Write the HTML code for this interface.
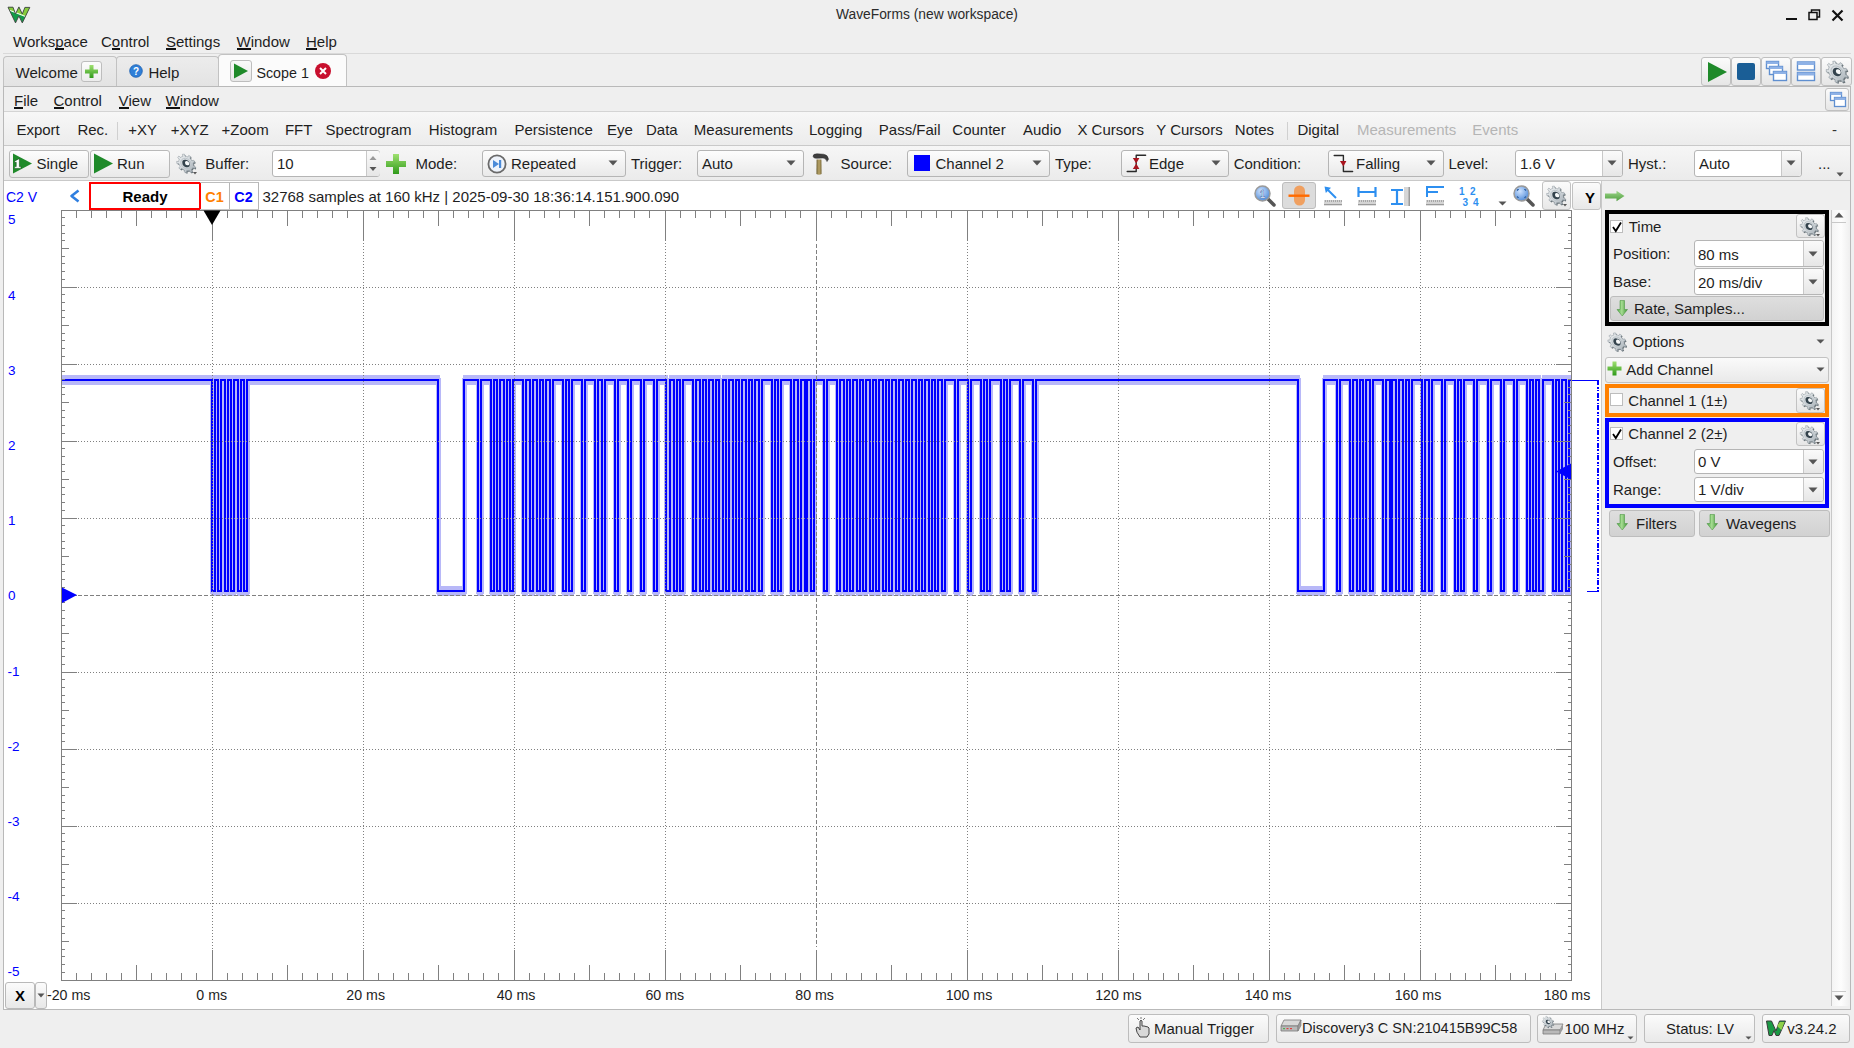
<!DOCTYPE html><html><head><meta charset="utf-8"><style>
html,body{margin:0;padding:0}
body{width:1854px;height:1048px;position:relative;overflow:hidden;background:#efefef;font-family:'Liberation Sans', sans-serif;}
.t{position:absolute;white-space:nowrap;}
.r{position:absolute;box-sizing:border-box;}
svg.r{overflow:visible}
.u{text-decoration:underline;text-underline-offset:2px;text-decoration-thickness:2px}
</style></head><body>

<svg class="r" style="left:7px;top:5px;" width="24" height="20" viewBox="0 0 24 20">
<defs><clipPath id="wl"><path d="M1 2.2 L6 2.2 L8.5 9 L11.9 1.9 L15.3 9 L17.9 2.4 L22.8 2.4 L15.3 17.9 L11.9 11 L8.5 17.9 Z"/></clipPath></defs>
<path d="M1 2.2 L6 2.2 L8.5 9 L11.9 1.9 L15.3 9 L17.9 2.4 L22.8 2.4 L15.3 17.9 L11.9 11 L8.5 17.9 Z" fill="#129a48"/>
<g clip-path="url(#wl)"><path d="M0 0 H24 V13.5 L3 5.2 L0 5 Z" fill="#86cc3c"/><path d="M2.5 5.3 L21 12.6" stroke="#f4fff0" stroke-width="1.1"/></g>
<path d="M1 2.2 L6 2.2 L8.5 9 L11.9 1.9 L15.3 9 L17.9 2.4 L22.8 2.4 L15.3 17.9 L11.9 11 L8.5 17.9 Z" fill="none" stroke="#454545" stroke-width="0.9" stroke-linejoin="round"/>
</svg>
<div class="t" style="left:797.0px;width:260px;text-align:center;top:8.32px;font-size:13.8px;line-height:13.8px;color:#2b2b2b;font-weight:normal;">WaveForms (new workspace)</div>
<div class="r" style="left:1786px;top:18px;width:11px;height:2px;background:#111"></div>
<svg class="r" style="left:1808px;top:9px;" width="14" height="12" viewBox="0 0 14 12"><rect x="1" y="3.5" width="8" height="7" fill="none" stroke="#111" stroke-width="1.5"/><path d="M3.5 3.5 V1 H11.5 V8 H9" fill="none" stroke="#111" stroke-width="1.5"/></svg>
<svg class="r" style="left:1831px;top:9px;" width="13" height="13" viewBox="0 0 13 13"><path d="M1.5 1.5 L11.5 11.5 M11.5 1.5 L1.5 11.5" stroke="#111" stroke-width="2.2"/></svg>
<div class="t" style="left:13px;top:33.20px;font-size:15px;line-height:15px;color:#1e1e1e">Works<span style="border-bottom:2px solid #111;display:inline-block;line-height:18px;height:15px">p</span>ace</div>
<div class="t" style="left:101px;top:33.20px;font-size:15px;line-height:15px;color:#1e1e1e">C<span style="border-bottom:2px solid #111;display:inline-block;line-height:18px;height:15px">o</span>ntrol</div>
<div class="t" style="left:166px;top:33.20px;font-size:15px;line-height:15px;color:#1e1e1e"><span style="border-bottom:2px solid #111;display:inline-block;line-height:18px;height:15px">S</span>ettings</div>
<div class="t" style="left:236.5px;top:33.20px;font-size:15px;line-height:15px;color:#1e1e1e"><span style="border-bottom:2px solid #111;display:inline-block;line-height:18px;height:15px">W</span>indow</div>
<div class="t" style="left:306px;top:33.20px;font-size:15px;line-height:15px;color:#1e1e1e"><span style="border-bottom:2px solid #111;display:inline-block;line-height:18px;height:15px">H</span>elp</div>
<div class="r" style="left:3px;top:53px;width:1848px;height:1px;background:#d9d9d9"></div>
<div class="r" style="left:3px;top:56px;width:114px;height:31px;background:linear-gradient(#ececec,#e3e3e3);border:1px solid #c2c2c2;border-bottom:none;border-radius:4px 4px 0 0"></div>
<div class="t" style="left:15.5px;top:65.00px;font-size:15px;line-height:15px;color:#1e1e1e;font-weight:normal;">Welcome</div>
<div class="r" style="left:81px;top:61px;width:21px;height:21px;background:linear-gradient(#fcfcfc,#ececec);border:1px solid #bdbdbd;border-radius:3px"></div>
<svg class="r" style="left:84px;top:64px;" width="16" height="16" viewBox="0 0 16 16"><defs><linearGradient id="gp" x1="0" y1="0" x2="0" y2="1"><stop offset="0" stop-color="#9fe070"/><stop offset="1" stop-color="#2f9a1a"/></linearGradient></defs><path d="M5.5 1 H9.5 V5.5 H14 V9.5 H9.5 V14 H5.5 V9.5 H1 V5.5 H5.5 Z" fill="url(#gp)"/></svg>
<div class="r" style="left:116px;top:56px;width:103px;height:31px;background:linear-gradient(#ececec,#e3e3e3);border:1px solid #c2c2c2;border-bottom:none;border-radius:4px 4px 0 0"></div>
<svg class="r" style="left:129px;top:64px;" width="14" height="14" viewBox="0 0 14 14"><circle cx="7" cy="7" r="6.3" fill="#2f7fd8" stroke="#1d5fb0" stroke-width="0.8"/><text x="7" y="11" text-anchor="middle" font-family="Liberation Sans" font-weight="bold" font-size="10" fill="#fff">?</text></svg>
<div class="t" style="left:148.4px;top:65.00px;font-size:15px;line-height:15px;color:#1e1e1e;font-weight:normal;">Help</div>
<div class="r" style="left:218px;top:54px;width:129px;height:34px;background:#fbfbfb;border:1px solid #c2c2c2;border-bottom:none;border-radius:4px 4px 0 0"></div>
<div class="r" style="left:230px;top:60px;width:22px;height:22px;background:linear-gradient(#fafafa,#e8e8e8);border:1px solid #bdbdbd;border-radius:3px"></div>
<svg class="r" style="left:233px;top:63px;" width="16" height="16" viewBox="0 0 16 16"><path d="M1 0.5 L15 8 L1 15.5 Z" fill="#1f8a2a"/></svg>
<div class="t" style="left:256.4px;top:65.60px;font-size:14.3px;line-height:14.3px;color:#1e1e1e;font-weight:normal;">Scope 1</div>
<svg class="r" style="left:315px;top:63px;" width="16" height="16" viewBox="0 0 16 16"><circle cx="8" cy="8" r="8" fill="#c8102e"/><path d="M5 5 L11 11 M11 5 L5 11" stroke="#fff" stroke-width="2"/></svg>
<div class="r" style="left:1701px;top:57px;width:30px;height:29px;background:linear-gradient(#fbfbfb,#e6e6e6);border:1px solid #c0c0c0;border-radius:3px"></div>
<div class="r" style="left:1731px;top:57px;width:30px;height:29px;background:linear-gradient(#fbfbfb,#e6e6e6);border:1px solid #c0c0c0;border-radius:3px"></div>
<div class="r" style="left:1761px;top:57px;width:30px;height:29px;background:linear-gradient(#fbfbfb,#e6e6e6);border:1px solid #c0c0c0;border-radius:3px"></div>
<div class="r" style="left:1791px;top:57px;width:30px;height:29px;background:linear-gradient(#fbfbfb,#e6e6e6);border:1px solid #c0c0c0;border-radius:3px"></div>
<div class="r" style="left:1821px;top:57px;width:31px;height:29px;background:linear-gradient(#fbfbfb,#e6e6e6);border:1px solid #c0c0c0;border-radius:3px"></div>
<svg class="r" style="left:1706px;top:61px;" width="22" height="22" viewBox="0 0 22 22"><path d="M2 1 L21 11 L2 21 Z" fill="#1f8a2a"/></svg>
<svg class="r" style="left:1736px;top:62px;" width="20" height="20" viewBox="0 0 20 20"><rect x="1" y="1" width="18" height="17" rx="2" fill="#1a5e96"/></svg>
<svg class="r" style="left:1765px;top:60px;" width="22" height="22" viewBox="0 0 22 22"><rect x="1.5" y="1.5" width="12" height="7" fill="#fff" stroke="#5f8fd0" stroke-width="1.4"/><rect x="1.5" y="1.5" width="12" height="2.5" fill="#8fb2e6"/><rect x="4.5" y="6.5" width="13" height="8" fill="#fff" stroke="#5f8fd0" stroke-width="1.4"/><rect x="4.5" y="6.5" width="13" height="2.5" fill="#8fb2e6"/><rect x="8.5" y="11.5" width="13" height="9" fill="#fff" stroke="#5f8fd0" stroke-width="1.4"/><rect x="8.5" y="11.5" width="13" height="2.5" fill="#8fb2e6"/></svg>
<svg class="r" style="left:1796px;top:60px;" width="20" height="22" viewBox="0 0 20 22"><rect x="1.5" y="2" width="17" height="8" fill="#fff" stroke="#5f8fd0" stroke-width="1.4"/><rect x="1.5" y="2" width="17" height="3" fill="#8fb2e6"/><rect x="1.5" y="12.5" width="17" height="8" fill="#fff" stroke="#5f8fd0" stroke-width="1.4"/><rect x="1.5" y="12.5" width="17" height="3" fill="#8fb2e6"/></svg>
<svg width="0" height="0" style="position:absolute"><defs><linearGradient id="gg" x1="0" y1="0" x2="1" y2="1"><stop offset="0" stop-color="#f2f4f5"/><stop offset="0.55" stop-color="#cfd5d9"/><stop offset="1" stop-color="#9aa4ab"/></linearGradient><linearGradient id="ga" x1="0" y1="0" x2="1" y2="0"><stop offset="0" stop-color="#b6e39a"/><stop offset="1" stop-color="#3c9a2a"/></linearGradient></defs></svg>
<svg class="r" style="left:1824px;top:59px;" width="26" height="26" viewBox="0 0 26 26"><g transform="translate(13,13) scale(0.95)"><g transform="rotate(-45) scale(0.8,1) rotate(45)"><path d="M9.90,0.00 L9.72,1.89 L12.26,2.92 L11.27,5.64 L8.66,4.80 L7.58,6.36 L6.23,7.69 L7.51,10.12 L5.00,11.56 L3.55,9.24 L1.72,9.75 L-0.17,9.90 L-0.75,12.58 L-3.60,12.07 L-3.22,9.36 L-4.95,8.57 L-6.49,7.47 L-8.66,9.15 L-10.52,6.94 L-8.49,5.10 L-9.30,3.39 L-9.78,1.55 L-12.52,1.45 L-12.52,-1.45 L-9.78,-1.55 L-9.30,-3.39 L-8.49,-5.10 L-10.52,-6.94 L-8.66,-9.15 L-6.49,-7.47 L-4.95,-8.57 L-3.22,-9.36 L-3.60,-12.07 L-0.75,-12.58 L-0.17,-9.90 L1.72,-9.75 L3.55,-9.24 L5.00,-11.56 L7.51,-10.12 L6.23,-7.69 L7.58,-6.36 L8.66,-4.80 L11.27,-5.64 L12.26,-2.92 L9.72,-1.89 Z" transform="translate(1.2,1.2)" fill="#4e5a62" opacity="0.85"/><path d="M9.90,0.00 L9.72,1.89 L12.26,2.92 L11.27,5.64 L8.66,4.80 L7.58,6.36 L6.23,7.69 L7.51,10.12 L5.00,11.56 L3.55,9.24 L1.72,9.75 L-0.17,9.90 L-0.75,12.58 L-3.60,12.07 L-3.22,9.36 L-4.95,8.57 L-6.49,7.47 L-8.66,9.15 L-10.52,6.94 L-8.49,5.10 L-9.30,3.39 L-9.78,1.55 L-12.52,1.45 L-12.52,-1.45 L-9.78,-1.55 L-9.30,-3.39 L-8.49,-5.10 L-10.52,-6.94 L-8.66,-9.15 L-6.49,-7.47 L-4.95,-8.57 L-3.22,-9.36 L-3.60,-12.07 L-0.75,-12.58 L-0.17,-9.90 L1.72,-9.75 L3.55,-9.24 L5.00,-11.56 L7.51,-10.12 L6.23,-7.69 L7.58,-6.36 L8.66,-4.80 L11.27,-5.64 L12.26,-2.92 L9.72,-1.89 Z" fill="url(#gg)" stroke="#8e979e" stroke-width="0.7"/><circle r="7" fill="none" stroke="#b9c1c7" stroke-width="1.2"/><circle r="5" fill="#34434d"/><circle cx="1.6" cy="-0.6" r="2.9" fill="#f6f8f9"/></g></g></svg>
<div class="r" style="left:3px;top:86px;width:1848px;height:924px;border:1px solid #b9b9b9;background:#efefef"></div>
<div class="t" style="left:14px;top:92.10px;font-size:15px;line-height:15px;color:#1e1e1e"><span style="border-bottom:2px solid #111;display:inline-block;line-height:18px;height:15px">F</span>ile</div>
<div class="t" style="left:53.5px;top:92.10px;font-size:15px;line-height:15px;color:#1e1e1e"><span style="border-bottom:2px solid #111;display:inline-block;line-height:18px;height:15px">C</span>ontrol</div>
<div class="t" style="left:118.5px;top:92.10px;font-size:15px;line-height:15px;color:#1e1e1e"><span style="border-bottom:2px solid #111;display:inline-block;line-height:18px;height:15px">V</span>iew</div>
<div class="t" style="left:165.5px;top:92.10px;font-size:15px;line-height:15px;color:#1e1e1e"><span style="border-bottom:2px solid #111;display:inline-block;line-height:18px;height:15px">W</span>indow</div>
<div class="r" style="left:1825px;top:88px;width:24px;height:23px;background:linear-gradient(#fbfbfb,#e6e6e6);border:1px solid #c0c0c0;border-radius:3px"></div>
<svg class="r" style="left:1829px;top:91px;" width="18" height="18" viewBox="0 0 18 18"><rect x="1.5" y="1.5" width="11" height="8" fill="#fff" stroke="#5f8fd0" stroke-width="1.3"/><rect x="1.5" y="1.5" width="11" height="2.5" fill="#8fb2e6"/><rect x="5.5" y="6.5" width="11" height="9" fill="#fff" stroke="#5f8fd0" stroke-width="1.3"/><rect x="5.5" y="6.5" width="11" height="2.5" fill="#8fb2e6"/></svg>
<div class="r" style="left:4px;top:111px;width:1846px;height:1px;background:#d4d4d4"></div>
<div class="r" style="left:4px;top:112px;width:1846px;height:34px;background:linear-gradient(#f7f7f7,#ececec);border-bottom:1px solid #c9c9c9"></div>
<div class="t" style="left:16.4px;top:122.10px;font-size:15px;line-height:15px;color:#1e1e1e;font-weight:normal;">Export</div>
<div class="t" style="left:77.4px;top:122.10px;font-size:15px;line-height:15px;color:#1e1e1e;font-weight:normal;">Rec.</div>
<div class="t" style="left:128.3px;top:122.10px;font-size:15px;line-height:15px;color:#1e1e1e;font-weight:normal;">+XY</div>
<div class="t" style="left:170.7px;top:122.10px;font-size:15px;line-height:15px;color:#1e1e1e;font-weight:normal;">+XYZ</div>
<div class="t" style="left:221.6px;top:122.10px;font-size:15px;line-height:15px;color:#1e1e1e;font-weight:normal;">+Zoom</div>
<div class="t" style="left:284.9px;top:122.10px;font-size:15px;line-height:15px;color:#1e1e1e;font-weight:normal;">FFT</div>
<div class="t" style="left:325.6px;top:122.10px;font-size:15px;line-height:15px;color:#1e1e1e;font-weight:normal;">Spectrogram</div>
<div class="t" style="left:428.8px;top:122.10px;font-size:15px;line-height:15px;color:#1e1e1e;font-weight:normal;">Histogram</div>
<div class="t" style="left:514.5px;top:122.10px;font-size:15px;line-height:15px;color:#1e1e1e;font-weight:normal;">Persistence</div>
<div class="t" style="left:607.0px;top:122.10px;font-size:15px;line-height:15px;color:#1e1e1e;font-weight:normal;">Eye</div>
<div class="t" style="left:646.0px;top:122.10px;font-size:15px;line-height:15px;color:#1e1e1e;font-weight:normal;">Data</div>
<div class="t" style="left:693.8px;top:122.10px;font-size:15px;line-height:15px;color:#1e1e1e;font-weight:normal;">Measurements</div>
<div class="t" style="left:809.0px;top:122.10px;font-size:15px;line-height:15px;color:#1e1e1e;font-weight:normal;">Logging</div>
<div class="t" style="left:878.8px;top:122.10px;font-size:15px;line-height:15px;color:#1e1e1e;font-weight:normal;">Pass/Fail</div>
<div class="t" style="left:952.3px;top:122.10px;font-size:15px;line-height:15px;color:#1e1e1e;font-weight:normal;">Counter</div>
<div class="t" style="left:1023.0px;top:122.10px;font-size:15px;line-height:15px;color:#1e1e1e;font-weight:normal;">Audio</div>
<div class="t" style="left:1077.4px;top:122.10px;font-size:15px;line-height:15px;color:#1e1e1e;font-weight:normal;">X Cursors</div>
<div class="t" style="left:1156.3px;top:122.10px;font-size:15px;line-height:15px;color:#1e1e1e;font-weight:normal;">Y Cursors</div>
<div class="t" style="left:1234.8px;top:122.10px;font-size:15px;line-height:15px;color:#1e1e1e;font-weight:normal;">Notes</div>
<div class="t" style="left:1297.4px;top:122.10px;font-size:15px;line-height:15px;color:#1e1e1e;font-weight:normal;">Digital</div>
<div class="t" style="left:1357.0px;top:122.10px;font-size:15px;line-height:15px;color:#b5b5b5;font-weight:normal;">Measurements</div>
<div class="t" style="left:1472.3px;top:122.10px;font-size:15px;line-height:15px;color:#b5b5b5;font-weight:normal;">Events</div>
<div class="t" style="left:1832.0px;top:122.10px;font-size:15px;line-height:15px;color:#333;font-weight:normal;">-</div>
<div class="r" style="left:117px;top:122px;width:1px;height:18px;background:#d0d0d0"></div>
<div class="r" style="left:1287px;top:122px;width:1px;height:18px;background:#d0d0d0"></div>
<div class="r" style="left:4px;top:146px;width:1846px;height:35px;background:linear-gradient(#f6f6f6,#ebebeb);border-bottom:1px solid #c9c9c9"></div>
<div class="r" style="left:9px;top:150px;width:80px;height:28px;background:linear-gradient(#fdfdfd,#e9e9e9);border:1px solid #b9b9b9;border-radius:3px;"></div>
<svg class="r" style="left:12px;top:153px;" width="22" height="22" viewBox="0 0 22 22"><path d="M1 0.5 L20 10.5 L1 20.5 Z" fill="#1f8a2a"/><path d="M2.6 8.2 L6.4 6 L7.4 6 L7.4 13.6 L9 13.6 L9 15.4 L2.4 15.4 L2.4 13.6 L4.2 13.6 L4.2 9.2 L2.6 9.8 Z" fill="#fff" stroke="#0d4d16" stroke-width="0.6"/></svg>
<div class="t" style="left:36.5px;top:156.20px;font-size:15px;line-height:15px;color:#1e1e1e;font-weight:normal;">Single</div>
<div class="r" style="left:90px;top:150px;width:80px;height:28px;background:linear-gradient(#fdfdfd,#e9e9e9);border:1px solid #b9b9b9;border-radius:3px;"></div>
<svg class="r" style="left:93px;top:153px;" width="22" height="22" viewBox="0 0 22 22"><path d="M1 0.5 L20 10.5 L1 20.5 Z" fill="#1f8a2a"/></svg>
<div class="t" style="left:117.0px;top:156.20px;font-size:15px;line-height:15px;color:#1e1e1e;font-weight:normal;">Run</div>
<svg class="r" style="left:175px;top:152px;" width="24" height="24" viewBox="0 0 24 24"><g transform="translate(11,11.5) scale(0.82)"><g transform="rotate(-45) scale(0.8,1) rotate(45)"><path d="M9.90,0.00 L9.72,1.89 L12.26,2.92 L11.27,5.64 L8.66,4.80 L7.58,6.36 L6.23,7.69 L7.51,10.12 L5.00,11.56 L3.55,9.24 L1.72,9.75 L-0.17,9.90 L-0.75,12.58 L-3.60,12.07 L-3.22,9.36 L-4.95,8.57 L-6.49,7.47 L-8.66,9.15 L-10.52,6.94 L-8.49,5.10 L-9.30,3.39 L-9.78,1.55 L-12.52,1.45 L-12.52,-1.45 L-9.78,-1.55 L-9.30,-3.39 L-8.49,-5.10 L-10.52,-6.94 L-8.66,-9.15 L-6.49,-7.47 L-4.95,-8.57 L-3.22,-9.36 L-3.60,-12.07 L-0.75,-12.58 L-0.17,-9.90 L1.72,-9.75 L3.55,-9.24 L5.00,-11.56 L7.51,-10.12 L6.23,-7.69 L7.58,-6.36 L8.66,-4.80 L11.27,-5.64 L12.26,-2.92 L9.72,-1.89 Z" transform="translate(1.2,1.2)" fill="#4e5a62" opacity="0.85"/><path d="M9.90,0.00 L9.72,1.89 L12.26,2.92 L11.27,5.64 L8.66,4.80 L7.58,6.36 L6.23,7.69 L7.51,10.12 L5.00,11.56 L3.55,9.24 L1.72,9.75 L-0.17,9.90 L-0.75,12.58 L-3.60,12.07 L-3.22,9.36 L-4.95,8.57 L-6.49,7.47 L-8.66,9.15 L-10.52,6.94 L-8.49,5.10 L-9.30,3.39 L-9.78,1.55 L-12.52,1.45 L-12.52,-1.45 L-9.78,-1.55 L-9.30,-3.39 L-8.49,-5.10 L-10.52,-6.94 L-8.66,-9.15 L-6.49,-7.47 L-4.95,-8.57 L-3.22,-9.36 L-3.60,-12.07 L-0.75,-12.58 L-0.17,-9.90 L1.72,-9.75 L3.55,-9.24 L5.00,-11.56 L7.51,-10.12 L6.23,-7.69 L7.58,-6.36 L8.66,-4.80 L11.27,-5.64 L12.26,-2.92 L9.72,-1.89 Z" fill="url(#gg)" stroke="#8e979e" stroke-width="0.7"/><circle r="7" fill="none" stroke="#b9c1c7" stroke-width="1.2"/><circle r="5" fill="#34434d"/><circle cx="1.6" cy="-0.6" r="2.9" fill="#f6f8f9"/></g></g><path d="M18 20 L22 20 L20 22.5 Z" fill="#555"/></svg>
<div class="t" style="left:205.3px;top:156.20px;font-size:15px;line-height:15px;color:#1e1e1e;font-weight:normal;">Buffer:</div>
<div class="r" style="left:272px;top:150px;width:108px;height:27px;background:#fff;border:1px solid #b5b5b5;border-radius:3px"></div>
<div class="r" style="left:366px;top:151px;width:13px;height:25px;background:linear-gradient(#fafafa,#e6e6e6);border-left:1px solid #c8c8c8;border-radius:0 3px 3px 0"></div>
<svg class="r" style="left:368px;top:160px;" width="10" height="6" viewBox="0 0 10 6"><path d="M0.5 0.5 L9.5 0.5 L5 5.5 Z" fill="#555"/></svg>
<div class="r" style="left:366px;top:151px;width:14px;height:25px;background:linear-gradient(#fafafa,#e6e6e6);border-left:1px solid #c8c8c8;border-radius:0 3px 3px 0"></div>
<svg class="r" style="left:367px;top:154px;" width="12" height="20" viewBox="0 0 12 20"><path d="M2.5 6 L9.5 6 L6 2 Z" fill="#9a9a9a"/><path d="M2.5 13 L9.5 13 L6 17 Z" fill="#555"/></svg>
<div class="t" style="left:277.0px;top:156.20px;font-size:15px;line-height:15px;color:#1e1e1e;font-weight:normal;">10</div>
<svg class="r" style="left:385px;top:153px;" width="22" height="22" viewBox="0 0 22 22"><path d="M8 1 H14 V8 H21 V14 H14 V21 H8 V14 H1 V8 H8 Z" fill="url(#gp)"/></svg>
<div class="t" style="left:415.5px;top:156.20px;font-size:15px;line-height:15px;color:#1e1e1e;font-weight:normal;">Mode:</div>
<div class="r" style="left:482px;top:150px;width:144px;height:27px;background:linear-gradient(#fdfdfd,#e9e9e9);border:1px solid #b5b5b5;border-radius:3px"></div>
<svg class="r" style="left:608px;top:160px;" width="10" height="6" viewBox="0 0 10 6"><path d="M0.5 0.5 L9.5 0.5 L5 5.5 Z" fill="#555"/></svg>
<svg class="r" style="left:487px;top:153.5px;" width="20" height="20" viewBox="0 0 20 20"><circle cx="10" cy="10" r="8.6" fill="#eef3fb" stroke="#6a6a6a" stroke-width="1.8"/><rect x="12" y="6" width="2.2" height="8" fill="#4a8ad8"/><path d="M6 6 L12 10 L6 14 Z" fill="#4a8ad8"/></svg>
<div class="t" style="left:511.0px;top:156.20px;font-size:15px;line-height:15px;color:#1e1e1e;font-weight:normal;">Repeated</div>
<div class="t" style="left:631.0px;top:156.20px;font-size:15px;line-height:15px;color:#1e1e1e;font-weight:normal;">Trigger:</div>
<div class="r" style="left:697px;top:150px;width:107px;height:27px;background:linear-gradient(#fdfdfd,#e9e9e9);border:1px solid #b5b5b5;border-radius:3px"></div>
<svg class="r" style="left:786px;top:160px;" width="10" height="6" viewBox="0 0 10 6"><path d="M0.5 0.5 L9.5 0.5 L5 5.5 Z" fill="#555"/></svg>
<div class="t" style="left:702.0px;top:156.20px;font-size:15px;line-height:15px;color:#1e1e1e;font-weight:normal;">Auto</div>
<svg class="r" style="left:812px;top:153px;" width="18" height="23" viewBox="0 0 18 23"><defs><linearGradient id="hm" x1="0" y1="0" x2="1" y2="0"><stop offset="0" stop-color="#6f6235"/><stop offset="0.5" stop-color="#b9a468"/><stop offset="1" stop-color="#7a6a3a"/></linearGradient></defs><path d="M4.6 6.5 L9.4 6.5 L9.6 21 Q7 22.3 4.4 21 Z" fill="url(#hm)"/><path d="M1 3.2 Q1.2 0.8 5 0.8 L11.5 1.2 Q16 1.8 16.5 6.2 L15 8.6 Q14 5.2 11 5 L4.5 5.3 Q1.5 5.6 1 3.2 Z" fill="#3e3e3e" stroke="#2a2a2a" stroke-width="0.5"/></svg>
<div class="t" style="left:840.6px;top:156.20px;font-size:15px;line-height:15px;color:#1e1e1e;font-weight:normal;">Source:</div>
<div class="r" style="left:907px;top:150px;width:143px;height:27px;background:linear-gradient(#fdfdfd,#e9e9e9);border:1px solid #b5b5b5;border-radius:3px"></div>
<svg class="r" style="left:1032px;top:160px;" width="10" height="6" viewBox="0 0 10 6"><path d="M0.5 0.5 L9.5 0.5 L5 5.5 Z" fill="#555"/></svg>
<div class="r" style="left:914px;top:155px;width:16px;height:16px;background:#0000ff"></div>
<div class="t" style="left:935.5px;top:156.20px;font-size:15px;line-height:15px;color:#1e1e1e;font-weight:normal;">Channel 2</div>
<div class="t" style="left:1055.0px;top:156.20px;font-size:15px;line-height:15px;color:#1e1e1e;font-weight:normal;">Type:</div>
<div class="r" style="left:1121px;top:150px;width:108px;height:27px;background:linear-gradient(#fdfdfd,#e9e9e9);border:1px solid #b5b5b5;border-radius:3px"></div>
<svg class="r" style="left:1211px;top:160px;" width="10" height="6" viewBox="0 0 10 6"><path d="M0.5 0.5 L9.5 0.5 L5 5.5 Z" fill="#555"/></svg>
<svg class="r" style="left:1126px;top:153px;" width="22" height="22" viewBox="0 0 22 22"><path d="M1.2 18.5 H10.2 V2.3 H19.6" fill="none" stroke="#2a2a2a" stroke-width="1.4" stroke-linecap="round" stroke-linejoin="round"/><path d="M6.8 5.1 H13.4 L10.2 10.5 Z M6.8 15.9 H13.4 L10.2 10.5 Z" fill="#a8141e"/></svg>
<div class="t" style="left:1149.0px;top:156.20px;font-size:15px;line-height:15px;color:#1e1e1e;font-weight:normal;">Edge</div>
<div class="t" style="left:1233.7px;top:156.20px;font-size:15px;line-height:15px;color:#1e1e1e;font-weight:normal;">Condition:</div>
<div class="r" style="left:1328px;top:150px;width:116px;height:27px;background:linear-gradient(#fdfdfd,#e9e9e9);border:1px solid #b5b5b5;border-radius:3px"></div>
<svg class="r" style="left:1426px;top:160px;" width="10" height="6" viewBox="0 0 10 6"><path d="M0.5 0.5 L9.5 0.5 L5 5.5 Z" fill="#555"/></svg>
<svg class="r" style="left:1333px;top:153px;" width="22" height="22" viewBox="0 0 22 22"><path d="M1.2 2.5 H10.4 V18.5 H19.6" fill="none" stroke="#2a2a2a" stroke-width="1.4" stroke-linecap="round" stroke-linejoin="round"/><path d="M6.9 8.1 H13.4 L10.4 13.6 Z" fill="#a8141e"/></svg>
<div class="t" style="left:1356.0px;top:156.20px;font-size:15px;line-height:15px;color:#1e1e1e;font-weight:normal;">Falling</div>
<div class="t" style="left:1448.5px;top:156.20px;font-size:15px;line-height:15px;color:#1e1e1e;font-weight:normal;">Level:</div>
<div class="r" style="left:1515px;top:150px;width:108px;height:27px;background:#fff;border:1px solid #b5b5b5;border-radius:3px"></div>
<div class="r" style="left:1602px;top:151px;width:20px;height:25px;background:linear-gradient(#fafafa,#e6e6e6);border-left:1px solid #c8c8c8;border-radius:0 3px 3px 0"></div>
<svg class="r" style="left:1607px;top:160px;" width="10" height="6" viewBox="0 0 10 6"><path d="M0.5 0.5 L9.5 0.5 L5 5.5 Z" fill="#555"/></svg>
<div class="t" style="left:1520.0px;top:156.20px;font-size:15px;line-height:15px;color:#1e1e1e;font-weight:normal;">1.6 V</div>
<div class="t" style="left:1628.0px;top:156.20px;font-size:15px;line-height:15px;color:#1e1e1e;font-weight:normal;">Hyst.:</div>
<div class="r" style="left:1694px;top:150px;width:108px;height:27px;background:#fff;border:1px solid #b5b5b5;border-radius:3px"></div>
<div class="r" style="left:1781px;top:151px;width:20px;height:25px;background:linear-gradient(#fafafa,#e6e6e6);border-left:1px solid #c8c8c8;border-radius:0 3px 3px 0"></div>
<svg class="r" style="left:1786px;top:160px;" width="10" height="6" viewBox="0 0 10 6"><path d="M0.5 0.5 L9.5 0.5 L5 5.5 Z" fill="#555"/></svg>
<div class="t" style="left:1699.0px;top:156.20px;font-size:15px;line-height:15px;color:#1e1e1e;font-weight:normal;">Auto</div>
<div class="t" style="left:1818.0px;top:156.20px;font-size:15px;line-height:15px;color:#1e1e1e;font-weight:normal;">...</div>
<svg class="r" style="left:1836px;top:171.5px;" width="8" height="5" viewBox="0 0 8 5"><path d="M0.5 0.5 L7.5 0.5 L4 4.5 Z" fill="#555"/></svg>
<div class="r" style="left:4px;top:181px;width:1597px;height:828px;background:#ffffff"></div>
<div class="t" style="left:6.0px;top:189.65px;font-size:14px;line-height:14px;color:#0000ff;font-weight:normal;">C2 V</div>
<svg class="r" style="left:69px;top:189px;" width="12" height="14" viewBox="0 0 12 14"><path d="M9.5 1.5 L2.5 7 L9.5 12.5" fill="none" stroke="#2f7fe0" stroke-width="2.6" stroke-linejoin="round"/></svg>
<div class="r" style="left:89px;top:182px;width:112px;height:28px;border:2px solid #ff0000;background:#fff"></div>
<div class="t" style="left:90.0px;width:110px;text-align:center;top:189.20px;font-size:15px;line-height:15px;color:#000;font-weight:bold;">Ready</div>
<div class="r" style="left:200px;top:182px;width:30px;height:28px;border-top:1px solid #bdbdbd;border-right:1px solid #b5b5b5;border-bottom:1px solid #c5c5c5"></div>
<div class="t" style="left:199.5px;width:30px;text-align:center;top:189.51px;font-size:14.4px;line-height:14.4px;color:#ff8000;font-weight:bold;">C1</div>
<div class="r" style="left:229px;top:182px;width:30px;height:28px;border-top:1px solid #bdbdbd;border-right:1px solid #b5b5b5;border-bottom:1px solid #c5c5c5"></div>
<div class="t" style="left:228.5px;width:30px;text-align:center;top:189.51px;font-size:14.4px;line-height:14.4px;color:#0000ff;font-weight:bold;">C2</div>
<div class="t" style="left:262.5px;top:189.10px;font-size:15px;line-height:15px;color:#1e1e1e;font-weight:normal;">32768 samples at 160 kHz | 2025-09-30 18:36:14.151.900.090</div>
<svg class="r" style="left:1254px;top:185px;" width="23" height="22" viewBox="0 0 23 22"><defs><radialGradient id="zg" cx="0.4" cy="0.35" r="0.7"><stop offset="0" stop-color="#cfe3ff"/><stop offset="1" stop-color="#4a87d6"/></radialGradient></defs><path d="M12 12 L20 20" stroke="#555" stroke-width="3.5" stroke-linecap="round"/><circle cx="8.5" cy="8.5" r="7.5" fill="url(#zg)" stroke="#9a9a9a" stroke-width="1.5"/><text x="8.5" y="12.5" text-anchor="middle" font-family="Liberation Sans" font-weight="bold" font-size="10" fill="#fff" stroke="#3f6fb0" stroke-width="0.5">1</text></svg>
<div class="r" style="left:1282px;top:182px;width:34px;height:27px;background:#dcdcdc;border:1px solid #bdbdbd;border-radius:3px"></div>
<svg class="r" style="left:1287px;top:184px;" width="24" height="23" viewBox="0 0 24 23"><rect x="7" y="1.5" width="11" height="20" rx="5.5" fill="#f0a060"/><rect x="1.5" y="10.5" width="21" height="2.4" fill="#ff6a00"/></svg>
<svg class="r" style="left:1323px;top:186px;" width="20" height="20" viewBox="0 0 20 20"><path d="M3 2 L13 12" stroke="#2d8ff0" stroke-width="2"/><path d="M1.5 0.5 L8 1.8 L2.8 7 Z" fill="#2d8ff0"/><rect x="1" y="14" width="18" height="5" fill="#d4d4d4"/><rect x="1" y="18" width="18" height="1.3" fill="#9a9a9a"/><rect x="2" y="14" width="0.8" height="2" fill="#9a9a9a"/><rect x="4" y="14" width="0.8" height="2" fill="#9a9a9a"/><rect x="6" y="14" width="0.8" height="2" fill="#9a9a9a"/><rect x="8" y="14" width="0.8" height="2" fill="#9a9a9a"/><rect x="10" y="14" width="0.8" height="2" fill="#9a9a9a"/><rect x="12" y="14" width="0.8" height="2" fill="#9a9a9a"/><rect x="14" y="14" width="0.8" height="2" fill="#9a9a9a"/><rect x="16" y="14" width="0.8" height="2" fill="#9a9a9a"/><rect x="18" y="14" width="0.8" height="2" fill="#9a9a9a"/></svg>
<svg class="r" style="left:1357px;top:186px;" width="20" height="20" viewBox="0 0 20 20"><path d="M1.5 1 V11 M18.5 1 V11 M1.5 6 H18.5" stroke="#2d8ff0" stroke-width="2.2"/><rect x="1" y="14" width="18" height="5" fill="#d4d4d4"/><rect x="1" y="18" width="18" height="1.3" fill="#9a9a9a"/><rect x="2" y="14" width="0.8" height="2" fill="#9a9a9a"/><rect x="4" y="14" width="0.8" height="2" fill="#9a9a9a"/><rect x="6" y="14" width="0.8" height="2" fill="#9a9a9a"/><rect x="8" y="14" width="0.8" height="2" fill="#9a9a9a"/><rect x="10" y="14" width="0.8" height="2" fill="#9a9a9a"/><rect x="12" y="14" width="0.8" height="2" fill="#9a9a9a"/><rect x="14" y="14" width="0.8" height="2" fill="#9a9a9a"/><rect x="16" y="14" width="0.8" height="2" fill="#9a9a9a"/><rect x="18" y="14" width="0.8" height="2" fill="#9a9a9a"/></svg>
<svg class="r" style="left:1390px;top:186px;" width="22" height="22" viewBox="0 0 22 22"><path d="M1 4 H13 M7 4 V18 M1 18 H13" stroke="#2d8ff0" stroke-width="2.2"/><rect x="14" y="1" width="6" height="19" fill="#d6d6d6"/><rect x="18.5" y="1" width="1.5" height="19" fill="#9a9a9a"/></svg>
<svg class="r" style="left:1425px;top:185px;" width="21" height="21" viewBox="0 0 21 21"><path d="M2 1 V12 M2 2 H19 M2 7 H13" stroke="#2d8ff0" stroke-width="2"/><rect x="1" y="15" width="18" height="5" fill="#d4d4d4"/><rect x="1" y="19" width="18" height="1.3" fill="#9a9a9a"/><rect x="2" y="15" width="0.8" height="2" fill="#9a9a9a"/><rect x="4" y="15" width="0.8" height="2" fill="#9a9a9a"/><rect x="6" y="15" width="0.8" height="2" fill="#9a9a9a"/><rect x="8" y="15" width="0.8" height="2" fill="#9a9a9a"/><rect x="10" y="15" width="0.8" height="2" fill="#9a9a9a"/><rect x="12" y="15" width="0.8" height="2" fill="#9a9a9a"/><rect x="14" y="15" width="0.8" height="2" fill="#9a9a9a"/><rect x="16" y="15" width="0.8" height="2" fill="#9a9a9a"/><rect x="18" y="15" width="0.8" height="2" fill="#9a9a9a"/></svg>
<svg class="r" style="left:1457px;top:186px;" width="24" height="22" viewBox="0 0 24 22"><text x="2" y="9" font-family="Liberation Sans" font-weight="bold" font-size="10" fill="#2d8ff0">1</text><text x="13" y="9" font-family="Liberation Sans" font-weight="bold" font-size="10" fill="#2d8ff0">2</text><text x="5.5" y="20" font-family="Liberation Sans" font-weight="bold" font-size="10" fill="#2d8ff0">3</text><text x="16" y="20" font-family="Liberation Sans" font-weight="bold" font-size="10" fill="#2d8ff0">4</text></svg>
<svg class="r" style="left:1498px;top:201px;" width="9" height="5" viewBox="0 0 9 5"><path d="M0.5 0.5 L8.5 0.5 L4.5 4.5 Z" fill="#555"/></svg>
<svg class="r" style="left:1513px;top:185px;" width="23" height="22" viewBox="0 0 23 22"><path d="M12 12 L20 20" stroke="#555" stroke-width="3.5" stroke-linecap="round"/><circle cx="8.5" cy="8.5" r="7.5" fill="url(#zg)" stroke="#9a9a9a" stroke-width="1.5"/><path d="M4.5 6 V4.5 H6 M11 4.5 H12.5 V6 M4.5 11 V12.5 H6 M11 12.5 H12.5 V11" fill="none" stroke="#3f6fb0" stroke-width="1.2"/></svg>
<div class="r" style="left:1542px;top:181px;width:29px;height:29px;background:linear-gradient(#fbfbfb,#e8e8e8);border:1px solid #c2c2c2;border-radius:3px"></div>
<svg class="r" style="left:1545px;top:184px;" width="24" height="24" viewBox="0 0 24 24"><g transform="translate(11,11.5) scale(0.82)"><g transform="rotate(-45) scale(0.8,1) rotate(45)"><path d="M9.90,0.00 L9.72,1.89 L12.26,2.92 L11.27,5.64 L8.66,4.80 L7.58,6.36 L6.23,7.69 L7.51,10.12 L5.00,11.56 L3.55,9.24 L1.72,9.75 L-0.17,9.90 L-0.75,12.58 L-3.60,12.07 L-3.22,9.36 L-4.95,8.57 L-6.49,7.47 L-8.66,9.15 L-10.52,6.94 L-8.49,5.10 L-9.30,3.39 L-9.78,1.55 L-12.52,1.45 L-12.52,-1.45 L-9.78,-1.55 L-9.30,-3.39 L-8.49,-5.10 L-10.52,-6.94 L-8.66,-9.15 L-6.49,-7.47 L-4.95,-8.57 L-3.22,-9.36 L-3.60,-12.07 L-0.75,-12.58 L-0.17,-9.90 L1.72,-9.75 L3.55,-9.24 L5.00,-11.56 L7.51,-10.12 L6.23,-7.69 L7.58,-6.36 L8.66,-4.80 L11.27,-5.64 L12.26,-2.92 L9.72,-1.89 Z" transform="translate(1.2,1.2)" fill="#4e5a62" opacity="0.85"/><path d="M9.90,0.00 L9.72,1.89 L12.26,2.92 L11.27,5.64 L8.66,4.80 L7.58,6.36 L6.23,7.69 L7.51,10.12 L5.00,11.56 L3.55,9.24 L1.72,9.75 L-0.17,9.90 L-0.75,12.58 L-3.60,12.07 L-3.22,9.36 L-4.95,8.57 L-6.49,7.47 L-8.66,9.15 L-10.52,6.94 L-8.49,5.10 L-9.30,3.39 L-9.78,1.55 L-12.52,1.45 L-12.52,-1.45 L-9.78,-1.55 L-9.30,-3.39 L-8.49,-5.10 L-10.52,-6.94 L-8.66,-9.15 L-6.49,-7.47 L-4.95,-8.57 L-3.22,-9.36 L-3.60,-12.07 L-0.75,-12.58 L-0.17,-9.90 L1.72,-9.75 L3.55,-9.24 L5.00,-11.56 L7.51,-10.12 L6.23,-7.69 L7.58,-6.36 L8.66,-4.80 L11.27,-5.64 L12.26,-2.92 L9.72,-1.89 Z" fill="url(#gg)" stroke="#8e979e" stroke-width="0.7"/><circle r="7" fill="none" stroke="#b9c1c7" stroke-width="1.2"/><circle r="5" fill="#34434d"/><circle cx="1.6" cy="-0.6" r="2.9" fill="#f6f8f9"/></g></g><path d="M18 20 L22 20 L20 22.5 Z" fill="#555"/></svg>
<div class="r" style="left:1572px;top:182px;width:29px;height:28px;background:linear-gradient(#fbfbfb,#e8e8e8);border:1px solid #c2c2c2;border-radius:3px"></div>
<div class="t" style="left:1580.0px;width:20px;text-align:center;top:189.80px;font-size:15px;line-height:15px;color:#000;font-weight:bold;">Y</div>
<div class="t" style="left:8.0px;top:213.47px;font-size:13.5px;line-height:13.5px;color:#0000ff;font-weight:normal;">5</div>
<div class="t" style="left:8.0px;top:288.65px;font-size:13.5px;line-height:13.5px;color:#0000ff;font-weight:normal;">4</div>
<div class="t" style="left:8.0px;top:363.83px;font-size:13.5px;line-height:13.5px;color:#0000ff;font-weight:normal;">3</div>
<div class="t" style="left:8.0px;top:439.01px;font-size:13.5px;line-height:13.5px;color:#0000ff;font-weight:normal;">2</div>
<div class="t" style="left:8.0px;top:514.19px;font-size:13.5px;line-height:13.5px;color:#0000ff;font-weight:normal;">1</div>
<div class="t" style="left:8.0px;top:589.37px;font-size:13.5px;line-height:13.5px;color:#0000ff;font-weight:normal;">0</div>
<div class="t" style="left:7.5px;top:664.55px;font-size:13.5px;line-height:13.5px;color:#0000ff;font-weight:normal;">-1</div>
<div class="t" style="left:7.5px;top:739.73px;font-size:13.5px;line-height:13.5px;color:#0000ff;font-weight:normal;">-2</div>
<div class="t" style="left:7.5px;top:814.91px;font-size:13.5px;line-height:13.5px;color:#0000ff;font-weight:normal;">-3</div>
<div class="t" style="left:7.5px;top:890.09px;font-size:13.5px;line-height:13.5px;color:#0000ff;font-weight:normal;">-4</div>
<div class="t" style="left:7.5px;top:965.27px;font-size:13.5px;line-height:13.5px;color:#0000ff;font-weight:normal;">-5</div>
<div class="t" style="left:47.0px;top:988.28px;font-size:14.2px;line-height:14.2px;color:#1e1e1e;font-weight:normal;">-20 ms</div>
<div class="t" style="left:171.7px;width:80px;text-align:center;top:988.28px;font-size:14.2px;line-height:14.2px;color:#1e1e1e;font-weight:normal;">0 ms</div>
<div class="t" style="left:325.7px;width:80px;text-align:center;top:988.28px;font-size:14.2px;line-height:14.2px;color:#1e1e1e;font-weight:normal;">20 ms</div>
<div class="t" style="left:476.0px;width:80px;text-align:center;top:988.28px;font-size:14.2px;line-height:14.2px;color:#1e1e1e;font-weight:normal;">40 ms</div>
<div class="t" style="left:624.8px;width:80px;text-align:center;top:988.28px;font-size:14.2px;line-height:14.2px;color:#1e1e1e;font-weight:normal;">60 ms</div>
<div class="t" style="left:774.6px;width:80px;text-align:center;top:988.28px;font-size:14.2px;line-height:14.2px;color:#1e1e1e;font-weight:normal;">80 ms</div>
<div class="t" style="left:929.0px;width:80px;text-align:center;top:988.28px;font-size:14.2px;line-height:14.2px;color:#1e1e1e;font-weight:normal;">100 ms</div>
<div class="t" style="left:1078.4px;width:80px;text-align:center;top:988.28px;font-size:14.2px;line-height:14.2px;color:#1e1e1e;font-weight:normal;">120 ms</div>
<div class="t" style="left:1228.0px;width:80px;text-align:center;top:988.28px;font-size:14.2px;line-height:14.2px;color:#1e1e1e;font-weight:normal;">140 ms</div>
<div class="t" style="left:1378.0px;width:80px;text-align:center;top:988.28px;font-size:14.2px;line-height:14.2px;color:#1e1e1e;font-weight:normal;">160 ms</div>
<div class="t" style="left:1527.0px;width:80px;text-align:center;top:988.28px;font-size:14.2px;line-height:14.2px;color:#1e1e1e;font-weight:normal;">180 ms</div>
<div class="r" style="left:5px;top:982px;width:30px;height:27px;background:linear-gradient(#fbfbfb,#e8e8e8);border:1px solid #b9b9b9;border-radius:3px"></div>
<div class="t" style="left:10.0px;width:20px;text-align:center;top:988.30px;font-size:15px;line-height:15px;color:#000;font-weight:bold;">X</div>
<div class="r" style="left:35px;top:982px;width:12px;height:27px;background:linear-gradient(#fbfbfb,#e8e8e8);border:1px solid #b9b9b9;border-radius:3px"></div>
<svg class="r" style="left:37px;top:993px;" width="8" height="5" viewBox="0 0 8 5"><path d="M0.5 0.5 L7.5 0.5 L4 4.5 Z" fill="#555"/></svg>
<svg class="r" style="left:0;top:0" width="1854" height="1048" shape-rendering="crispEdges"><clipPath id="pc"><rect x="62" y="211" width="1509" height="769"/></clipPath><g clip-path="url(#pc)"><g fill="#b8b8f8"><rect x="60.5" y="375" width="153.0" height="10"/><rect x="213.5" y="375" width="6.0" height="10"/><rect x="219.5" y="375" width="7.0" height="10"/><rect x="226.5" y="375" width="6.0" height="10"/><rect x="232.5" y="375" width="7.0" height="10"/><rect x="239.5" y="375" width="6.0" height="10"/><rect x="245.5" y="375" width="194.0" height="10"/><rect x="462.5" y="375" width="17.0" height="10"/><rect x="479.5" y="375" width="13.0" height="10"/><rect x="492.5" y="375" width="6.0" height="10"/><rect x="498.5" y="375" width="7.0" height="10"/><rect x="505.5" y="375" width="6.0" height="10"/><rect x="511.5" y="375" width="13.0" height="10"/><rect x="524.5" y="375" width="7.0" height="10"/><rect x="531.5" y="375" width="7.0" height="10"/><rect x="538.5" y="375" width="6.0" height="10"/><rect x="544.5" y="375" width="7.0" height="10"/><rect x="551.5" y="375" width="13.0" height="10"/><rect x="564.5" y="375" width="6.0" height="10"/><rect x="570.5" y="375" width="13.0" height="10"/><rect x="583.5" y="375" width="13.0" height="10"/><rect x="596.5" y="375" width="7.0" height="10"/><rect x="603.5" y="375" width="13.0" height="10"/><rect x="616.5" y="375" width="13.0" height="10"/><rect x="629.5" y="375" width="13.0" height="10"/><rect x="642.5" y="375" width="13.0" height="10"/><rect x="655.5" y="375" width="12.0" height="10"/><rect x="668.5" y="375" width="7.0" height="10"/><rect x="675.5" y="375" width="6.0" height="10"/><rect x="681.5" y="375" width="13.0" height="10"/><rect x="694.5" y="375" width="7.0" height="10"/><rect x="701.5" y="375" width="6.0" height="10"/><rect x="707.5" y="375" width="7.0" height="10"/><rect x="714.5" y="375" width="6.0" height="10"/><rect x="721.5" y="375" width="6.0" height="10"/><rect x="727.5" y="375" width="7.0" height="10"/><rect x="734.5" y="375" width="6.0" height="10"/><rect x="740.5" y="375" width="7.0" height="10"/><rect x="747.5" y="375" width="6.0" height="10"/><rect x="753.5" y="375" width="7.0" height="10"/><rect x="760.5" y="375" width="13.0" height="10"/><rect x="773.5" y="375" width="6.0" height="10"/><rect x="779.5" y="375" width="13.0" height="10"/><rect x="792.5" y="375" width="7.0" height="10"/><rect x="799.5" y="375" width="7.0" height="10"/><rect x="805.5" y="375" width="7.0" height="10"/><rect x="812.5" y="375" width="13.0" height="10"/><rect x="825.5" y="375" width="13.0" height="10"/><rect x="838.5" y="375" width="7.0" height="10"/><rect x="845.5" y="375" width="6.0" height="10"/><rect x="851.5" y="375" width="7.0" height="10"/><rect x="858.5" y="375" width="6.0" height="10"/><rect x="864.5" y="375" width="7.0" height="10"/><rect x="871.5" y="375" width="6.0" height="10"/><rect x="877.5" y="375" width="7.0" height="10"/><rect x="884.5" y="375" width="6.0" height="10"/><rect x="890.5" y="375" width="7.0" height="10"/><rect x="897.5" y="375" width="7.0" height="10"/><rect x="904.5" y="375" width="6.0" height="10"/><rect x="910.5" y="375" width="7.0" height="10"/><rect x="917.5" y="375" width="6.0" height="10"/><rect x="923.5" y="375" width="7.0" height="10"/><rect x="930.5" y="375" width="6.0" height="10"/><rect x="936.5" y="375" width="7.0" height="10"/><rect x="943.5" y="375" width="13.0" height="10"/><rect x="956.5" y="375" width="13.0" height="10"/><rect x="969.5" y="375" width="13.0" height="10"/><rect x="982.5" y="375" width="6.0" height="10"/><rect x="988.5" y="375" width="14.0" height="10"/><rect x="1002.5" y="375" width="6.0" height="10"/><rect x="1008.5" y="375" width="13.0" height="10"/><rect x="1021.5" y="375" width="13.0" height="10"/><rect x="1034.5" y="375" width="265.0" height="10"/><rect x="1322.5" y="375" width="16.0" height="10"/><rect x="1338.5" y="375" width="13.0" height="10"/><rect x="1351.5" y="375" width="7.0" height="10"/><rect x="1358.5" y="375" width="6.0" height="10"/><rect x="1364.5" y="375" width="7.0" height="10"/><rect x="1371.5" y="375" width="13.0" height="10"/><rect x="1384.5" y="375" width="7.0" height="10"/><rect x="1390.5" y="375" width="7.0" height="10"/><rect x="1397.5" y="375" width="7.0" height="10"/><rect x="1404.5" y="375" width="6.0" height="10"/><rect x="1410.5" y="375" width="13.0" height="10"/><rect x="1423.5" y="375" width="7.0" height="10"/><rect x="1430.5" y="375" width="13.0" height="10"/><rect x="1443.5" y="375" width="13.0" height="10"/><rect x="1456.5" y="375" width="6.0" height="10"/><rect x="1462.5" y="375" width="13.0" height="10"/><rect x="1475.5" y="375" width="14.0" height="10"/><rect x="1489.5" y="375" width="13.0" height="10"/><rect x="1502.5" y="375" width="13.0" height="10"/><rect x="1515.5" y="375" width="13.0" height="10"/><rect x="1528.5" y="375" width="6.0" height="10"/><rect x="1534.5" y="375" width="6.0" height="10"/><rect x="1541.5" y="375" width="13.0" height="10"/><rect x="1554.5" y="375" width="6.0" height="10"/><rect x="1560.5" y="375" width="7.0" height="10"/><rect x="1567.5" y="375" width="5.0" height="10"/><rect x="210.5" y="586" width="6.0" height="10"/><rect x="216.5" y="586" width="6.0" height="10"/><rect x="223.5" y="586" width="6.0" height="10"/><rect x="229.5" y="586" width="6.0" height="10"/><rect x="236.5" y="586" width="6.0" height="10"/><rect x="242.5" y="586" width="6.0" height="10"/><rect x="436.5" y="586" width="29.0" height="10"/><rect x="476.5" y="586" width="6.0" height="10"/><rect x="489.5" y="586" width="6.0" height="10"/><rect x="495.5" y="586" width="6.0" height="10"/><rect x="502.5" y="586" width="6.0" height="10"/><rect x="508.5" y="586" width="6.0" height="10"/><rect x="521.5" y="586" width="6.0" height="10"/><rect x="528.5" y="586" width="6.0" height="10"/><rect x="535.5" y="586" width="6.0" height="10"/><rect x="541.5" y="586" width="6.0" height="10"/><rect x="548.5" y="586" width="6.0" height="10"/><rect x="561.5" y="586" width="6.0" height="10"/><rect x="567.5" y="586" width="6.0" height="10"/><rect x="580.5" y="586" width="6.0" height="10"/><rect x="593.5" y="586" width="6.0" height="10"/><rect x="600.5" y="586" width="6.0" height="10"/><rect x="613.5" y="586" width="6.0" height="10"/><rect x="626.5" y="586" width="6.0" height="10"/><rect x="639.5" y="586" width="6.0" height="10"/><rect x="652.5" y="586" width="6.0" height="10"/><rect x="664.5" y="586" width="7.0" height="10"/><rect x="672.5" y="586" width="6.0" height="10"/><rect x="678.5" y="586" width="6.0" height="10"/><rect x="691.5" y="586" width="6.0" height="10"/><rect x="698.5" y="586" width="6.0" height="10"/><rect x="704.5" y="586" width="6.0" height="10"/><rect x="711.5" y="586" width="6.0" height="10"/><rect x="717.5" y="586" width="7.0" height="10"/><rect x="724.5" y="586" width="6.0" height="10"/><rect x="731.5" y="586" width="6.0" height="10"/><rect x="737.5" y="586" width="6.0" height="10"/><rect x="744.5" y="586" width="6.0" height="10"/><rect x="750.5" y="586" width="6.0" height="10"/><rect x="757.5" y="586" width="6.0" height="10"/><rect x="770.5" y="586" width="6.0" height="10"/><rect x="776.5" y="586" width="6.0" height="10"/><rect x="789.5" y="586" width="6.0" height="10"/><rect x="796.5" y="586" width="6.0" height="10"/><rect x="803.5" y="586" width="5.0" height="10"/><rect x="809.5" y="586" width="6.0" height="10"/><rect x="822.5" y="586" width="6.0" height="10"/><rect x="835.5" y="586" width="6.0" height="10"/><rect x="842.5" y="586" width="6.0" height="10"/><rect x="848.5" y="586" width="6.0" height="10"/><rect x="855.5" y="586" width="6.0" height="10"/><rect x="861.5" y="586" width="6.0" height="10"/><rect x="868.5" y="586" width="6.0" height="10"/><rect x="874.5" y="586" width="6.0" height="10"/><rect x="881.5" y="586" width="6.0" height="10"/><rect x="887.5" y="586" width="6.0" height="10"/><rect x="894.5" y="586" width="6.0" height="10"/><rect x="901.5" y="586" width="6.0" height="10"/><rect x="907.5" y="586" width="6.0" height="10"/><rect x="914.5" y="586" width="6.0" height="10"/><rect x="920.5" y="586" width="6.0" height="10"/><rect x="927.5" y="586" width="6.0" height="10"/><rect x="933.5" y="586" width="6.0" height="10"/><rect x="940.5" y="586" width="6.0" height="10"/><rect x="953.5" y="586" width="6.0" height="10"/><rect x="966.5" y="586" width="6.0" height="10"/><rect x="979.5" y="586" width="6.0" height="10"/><rect x="985.5" y="586" width="6.0" height="10"/><rect x="999.5" y="586" width="6.0" height="10"/><rect x="1005.5" y="586" width="6.0" height="10"/><rect x="1018.5" y="586" width="6.0" height="10"/><rect x="1031.5" y="586" width="6.0" height="10"/><rect x="1296.5" y="586" width="29.0" height="10"/><rect x="1335.5" y="586" width="6.0" height="10"/><rect x="1348.5" y="586" width="6.0" height="10"/><rect x="1355.5" y="586" width="6.0" height="10"/><rect x="1361.5" y="586" width="6.0" height="10"/><rect x="1368.5" y="586" width="6.0" height="10"/><rect x="1381.5" y="586" width="6.0" height="10"/><rect x="1388.5" y="586" width="5.0" height="10"/><rect x="1394.5" y="586" width="6.0" height="10"/><rect x="1401.5" y="586" width="6.0" height="10"/><rect x="1407.5" y="586" width="6.0" height="10"/><rect x="1420.5" y="586" width="6.0" height="10"/><rect x="1427.5" y="586" width="6.0" height="10"/><rect x="1440.5" y="586" width="6.0" height="10"/><rect x="1453.5" y="586" width="6.0" height="10"/><rect x="1459.5" y="586" width="6.0" height="10"/><rect x="1472.5" y="586" width="6.0" height="10"/><rect x="1486.5" y="586" width="6.0" height="10"/><rect x="1499.5" y="586" width="6.0" height="10"/><rect x="1512.5" y="586" width="6.0" height="10"/><rect x="1525.5" y="586" width="6.0" height="10"/><rect x="1531.5" y="586" width="6.0" height="10"/><rect x="1537.5" y="586" width="7.0" height="10"/><rect x="1551.5" y="586" width="6.0" height="10"/><rect x="1557.5" y="586" width="6.0" height="10"/><rect x="1564.5" y="586" width="6.0" height="10"/></g><path d="M62 380.0H212.0V591.0H215.0V380.0H218.0V591.0H221.0V380.0H225.0V591.0H228.0V380.0H231.0V591.0H234.0V380.0H238.0V591.0H241.0V380.0H244.0V591.0H247.0V380.0H438.0V591.0H464.0V380.0H478.0V591.0H481.0V380.0H491.0V591.0H494.0V380.0H497.0V591.0H500.0V380.0H504.0V591.0H507.0V380.0H510.0V591.0H513.0V380.0H523.0V591.0H526.0V380.0H530.0V591.0H533.0V380.0H537.0V591.0H540.0V380.0H543.0V591.0H546.0V380.0H550.0V591.0H553.0V380.0H563.0V591.0H566.0V380.0H569.0V591.0H572.0V380.0H582.0V591.0H585.0V380.0H595.0V591.0H598.0V380.0H602.0V591.0H605.0V380.0H615.0V591.0H618.0V380.0H628.0V591.0H631.0V380.0H641.0V591.0H644.0V380.0H654.0V591.0H657.0V380.0H666.0V591.0H670.0V380.0H674.0V591.0H677.0V380.0H680.0V591.0H683.0V380.0H693.0V591.0H696.0V380.0H700.0V591.0H703.0V380.0H706.0V591.0H709.0V380.0H713.0V591.0H716.0V380.0H719.0V591.0H723.0V380.0H726.0V591.0H729.0V380.0H733.0V591.0H736.0V380.0H739.0V591.0H742.0V380.0H746.0V591.0H749.0V380.0H752.0V591.0H755.0V380.0H759.0V591.0H762.0V380.0H772.0V591.0H775.0V380.0H778.0V591.0H781.0V380.0H791.0V591.0H794.0V380.0H798.0V591.0H801.0V380.0H805.0V591.0H807.0V380.0H811.0V591.0H814.0V380.0H824.0V591.0H827.0V380.0H837.0V591.0H840.0V380.0H844.0V591.0H847.0V380.0H850.0V591.0H853.0V380.0H857.0V591.0H860.0V380.0H863.0V591.0H866.0V380.0H870.0V591.0H873.0V380.0H876.0V591.0H879.0V380.0H883.0V591.0H886.0V380.0H889.0V591.0H892.0V380.0H896.0V591.0H899.0V380.0H903.0V591.0H906.0V380.0H909.0V591.0H912.0V380.0H916.0V591.0H919.0V380.0H922.0V591.0H925.0V380.0H929.0V591.0H932.0V380.0H935.0V591.0H938.0V380.0H942.0V591.0H945.0V380.0H955.0V591.0H958.0V380.0H968.0V591.0H971.0V380.0H981.0V591.0H984.0V380.0H987.0V591.0H990.0V380.0H1001.0V591.0H1004.0V380.0H1007.0V591.0H1010.0V380.0H1020.0V591.0H1023.0V380.0H1033.0V591.0H1036.0V380.0H1298.0V591.0H1324.0V380.0H1337.0V591.0H1340.0V380.0H1350.0V591.0H1353.0V380.0H1357.0V591.0H1360.0V380.0H1363.0V591.0H1366.0V380.0H1370.0V591.0H1373.0V380.0H1383.0V591.0H1386.0V380.0H1390.0V591.0H1392.0V380.0H1396.0V591.0H1399.0V380.0H1403.0V591.0H1406.0V380.0H1409.0V591.0H1412.0V380.0H1422.0V591.0H1425.0V380.0H1429.0V591.0H1432.0V380.0H1442.0V591.0H1445.0V380.0H1455.0V591.0H1458.0V380.0H1461.0V591.0H1464.0V380.0H1474.0V591.0H1477.0V380.0H1488.0V591.0H1491.0V380.0H1501.0V591.0H1504.0V380.0H1514.0V591.0H1517.0V380.0H1527.0V591.0H1530.0V380.0H1533.0V591.0H1536.0V380.0H1539.0V591.0H1543.0V380.0H1553.0V591.0H1556.0V380.0H1559.0V591.0H1562.0V380.0H1566.0V591.0H1569.0V380.0H1571" fill="none" stroke="#b8b8f8" stroke-width="5"/><path d="M62 380.0H212.0V591.0H215.0V380.0H218.0V591.0H221.0V380.0H225.0V591.0H228.0V380.0H231.0V591.0H234.0V380.0H238.0V591.0H241.0V380.0H244.0V591.0H247.0V380.0H438.0V591.0H464.0V380.0H478.0V591.0H481.0V380.0H491.0V591.0H494.0V380.0H497.0V591.0H500.0V380.0H504.0V591.0H507.0V380.0H510.0V591.0H513.0V380.0H523.0V591.0H526.0V380.0H530.0V591.0H533.0V380.0H537.0V591.0H540.0V380.0H543.0V591.0H546.0V380.0H550.0V591.0H553.0V380.0H563.0V591.0H566.0V380.0H569.0V591.0H572.0V380.0H582.0V591.0H585.0V380.0H595.0V591.0H598.0V380.0H602.0V591.0H605.0V380.0H615.0V591.0H618.0V380.0H628.0V591.0H631.0V380.0H641.0V591.0H644.0V380.0H654.0V591.0H657.0V380.0H666.0V591.0H670.0V380.0H674.0V591.0H677.0V380.0H680.0V591.0H683.0V380.0H693.0V591.0H696.0V380.0H700.0V591.0H703.0V380.0H706.0V591.0H709.0V380.0H713.0V591.0H716.0V380.0H719.0V591.0H723.0V380.0H726.0V591.0H729.0V380.0H733.0V591.0H736.0V380.0H739.0V591.0H742.0V380.0H746.0V591.0H749.0V380.0H752.0V591.0H755.0V380.0H759.0V591.0H762.0V380.0H772.0V591.0H775.0V380.0H778.0V591.0H781.0V380.0H791.0V591.0H794.0V380.0H798.0V591.0H801.0V380.0H805.0V591.0H807.0V380.0H811.0V591.0H814.0V380.0H824.0V591.0H827.0V380.0H837.0V591.0H840.0V380.0H844.0V591.0H847.0V380.0H850.0V591.0H853.0V380.0H857.0V591.0H860.0V380.0H863.0V591.0H866.0V380.0H870.0V591.0H873.0V380.0H876.0V591.0H879.0V380.0H883.0V591.0H886.0V380.0H889.0V591.0H892.0V380.0H896.0V591.0H899.0V380.0H903.0V591.0H906.0V380.0H909.0V591.0H912.0V380.0H916.0V591.0H919.0V380.0H922.0V591.0H925.0V380.0H929.0V591.0H932.0V380.0H935.0V591.0H938.0V380.0H942.0V591.0H945.0V380.0H955.0V591.0H958.0V380.0H968.0V591.0H971.0V380.0H981.0V591.0H984.0V380.0H987.0V591.0H990.0V380.0H1001.0V591.0H1004.0V380.0H1007.0V591.0H1010.0V380.0H1020.0V591.0H1023.0V380.0H1033.0V591.0H1036.0V380.0H1298.0V591.0H1324.0V380.0H1337.0V591.0H1340.0V380.0H1350.0V591.0H1353.0V380.0H1357.0V591.0H1360.0V380.0H1363.0V591.0H1366.0V380.0H1370.0V591.0H1373.0V380.0H1383.0V591.0H1386.0V380.0H1390.0V591.0H1392.0V380.0H1396.0V591.0H1399.0V380.0H1403.0V591.0H1406.0V380.0H1409.0V591.0H1412.0V380.0H1422.0V591.0H1425.0V380.0H1429.0V591.0H1432.0V380.0H1442.0V591.0H1445.0V380.0H1455.0V591.0H1458.0V380.0H1461.0V591.0H1464.0V380.0H1474.0V591.0H1477.0V380.0H1488.0V591.0H1491.0V380.0H1501.0V591.0H1504.0V380.0H1514.0V591.0H1517.0V380.0H1527.0V591.0H1530.0V380.0H1533.0V591.0H1536.0V380.0H1539.0V591.0H1543.0V380.0H1553.0V591.0H1556.0V380.0H1559.0V591.0H1562.0V380.0H1566.0V591.0H1569.0V380.0H1571" fill="none" stroke="#0000ff" stroke-width="2"/></g><path d="M1571 380.5 H1598" stroke="#0000ff" stroke-width="1"/><path d="M1598 380 V592" stroke="#0000ff" stroke-width="1.7" stroke-dasharray="5 1.5 2 1.5 1 1.5"/><path d="M1587 591.5 H1599" stroke="#0000ff" stroke-width="1"/></svg>
<svg class="r" style="left:0;top:0" width="1854" height="1048" shape-rendering="crispEdges"><path d="M76.5 211 V218 M76.5 980 V973" stroke="#808080"/><path d="M91.5 211 V218 M91.5 980 V973" stroke="#808080"/><path d="M106.5 211 V218 M106.5 980 V973" stroke="#808080"/><path d="M121.5 211 V218 M121.5 980 V973" stroke="#808080"/><path d="M136.5 211 V226 M136.5 980 V965" stroke="#808080"/><path d="M151.5 211 V218 M151.5 980 V973" stroke="#808080"/><path d="M166.5 211 V218 M166.5 980 V973" stroke="#808080"/><path d="M181.5 211 V218 M181.5 980 V973" stroke="#808080"/><path d="M196.5 211 V218 M196.5 980 V973" stroke="#808080"/><path d="M212.5 211 V241 M212.5 980 V950" stroke="#808080"/><path d="M227.5 211 V218 M227.5 980 V973" stroke="#808080"/><path d="M242.5 211 V218 M242.5 980 V973" stroke="#808080"/><path d="M257.5 211 V218 M257.5 980 V973" stroke="#808080"/><path d="M272.5 211 V218 M272.5 980 V973" stroke="#808080"/><path d="M287.5 211 V226 M287.5 980 V965" stroke="#808080"/><path d="M302.5 211 V218 M302.5 980 V973" stroke="#808080"/><path d="M317.5 211 V218 M317.5 980 V973" stroke="#808080"/><path d="M332.5 211 V218 M332.5 980 V973" stroke="#808080"/><path d="M347.5 211 V218 M347.5 980 V973" stroke="#808080"/><path d="M363.5 211 V241 M363.5 980 V950" stroke="#808080"/><path d="M378.5 211 V218 M378.5 980 V973" stroke="#808080"/><path d="M393.5 211 V218 M393.5 980 V973" stroke="#808080"/><path d="M408.5 211 V218 M408.5 980 V973" stroke="#808080"/><path d="M423.5 211 V218 M423.5 980 V973" stroke="#808080"/><path d="M438.5 211 V226 M438.5 980 V965" stroke="#808080"/><path d="M453.5 211 V218 M453.5 980 V973" stroke="#808080"/><path d="M468.5 211 V218 M468.5 980 V973" stroke="#808080"/><path d="M483.5 211 V218 M483.5 980 V973" stroke="#808080"/><path d="M498.5 211 V218 M498.5 980 V973" stroke="#808080"/><path d="M514.5 211 V241 M514.5 980 V950" stroke="#808080"/><path d="M529.5 211 V218 M529.5 980 V973" stroke="#808080"/><path d="M544.5 211 V218 M544.5 980 V973" stroke="#808080"/><path d="M559.5 211 V218 M559.5 980 V973" stroke="#808080"/><path d="M574.5 211 V218 M574.5 980 V973" stroke="#808080"/><path d="M589.5 211 V226 M589.5 980 V965" stroke="#808080"/><path d="M604.5 211 V218 M604.5 980 V973" stroke="#808080"/><path d="M619.5 211 V218 M619.5 980 V973" stroke="#808080"/><path d="M634.5 211 V218 M634.5 980 V973" stroke="#808080"/><path d="M649.5 211 V218 M649.5 980 V973" stroke="#808080"/><path d="M665.5 211 V241 M665.5 980 V950" stroke="#808080"/><path d="M680.5 211 V218 M680.5 980 V973" stroke="#808080"/><path d="M695.5 211 V218 M695.5 980 V973" stroke="#808080"/><path d="M710.5 211 V218 M710.5 980 V973" stroke="#808080"/><path d="M725.5 211 V218 M725.5 980 V973" stroke="#808080"/><path d="M740.5 211 V226 M740.5 980 V965" stroke="#808080"/><path d="M755.5 211 V218 M755.5 980 V973" stroke="#808080"/><path d="M770.5 211 V218 M770.5 980 V973" stroke="#808080"/><path d="M785.5 211 V218 M785.5 980 V973" stroke="#808080"/><path d="M800.5 211 V218 M800.5 980 V973" stroke="#808080"/><path d="M816.5 211 V241 M816.5 980 V950" stroke="#808080"/><path d="M831.5 211 V218 M831.5 980 V973" stroke="#808080"/><path d="M846.5 211 V218 M846.5 980 V973" stroke="#808080"/><path d="M861.5 211 V218 M861.5 980 V973" stroke="#808080"/><path d="M876.5 211 V218 M876.5 980 V973" stroke="#808080"/><path d="M891.5 211 V226 M891.5 980 V965" stroke="#808080"/><path d="M906.5 211 V218 M906.5 980 V973" stroke="#808080"/><path d="M921.5 211 V218 M921.5 980 V973" stroke="#808080"/><path d="M936.5 211 V218 M936.5 980 V973" stroke="#808080"/><path d="M951.5 211 V218 M951.5 980 V973" stroke="#808080"/><path d="M967.5 211 V241 M967.5 980 V950" stroke="#808080"/><path d="M982.5 211 V218 M982.5 980 V973" stroke="#808080"/><path d="M997.5 211 V218 M997.5 980 V973" stroke="#808080"/><path d="M1012.5 211 V218 M1012.5 980 V973" stroke="#808080"/><path d="M1027.5 211 V218 M1027.5 980 V973" stroke="#808080"/><path d="M1042.5 211 V226 M1042.5 980 V965" stroke="#808080"/><path d="M1057.5 211 V218 M1057.5 980 V973" stroke="#808080"/><path d="M1072.5 211 V218 M1072.5 980 V973" stroke="#808080"/><path d="M1087.5 211 V218 M1087.5 980 V973" stroke="#808080"/><path d="M1102.5 211 V218 M1102.5 980 V973" stroke="#808080"/><path d="M1118.5 211 V241 M1118.5 980 V950" stroke="#808080"/><path d="M1133.5 211 V218 M1133.5 980 V973" stroke="#808080"/><path d="M1148.5 211 V218 M1148.5 980 V973" stroke="#808080"/><path d="M1163.5 211 V218 M1163.5 980 V973" stroke="#808080"/><path d="M1178.5 211 V218 M1178.5 980 V973" stroke="#808080"/><path d="M1193.5 211 V226 M1193.5 980 V965" stroke="#808080"/><path d="M1208.5 211 V218 M1208.5 980 V973" stroke="#808080"/><path d="M1223.5 211 V218 M1223.5 980 V973" stroke="#808080"/><path d="M1238.5 211 V218 M1238.5 980 V973" stroke="#808080"/><path d="M1253.5 211 V218 M1253.5 980 V973" stroke="#808080"/><path d="M1269.5 211 V241 M1269.5 980 V950" stroke="#808080"/><path d="M1284.5 211 V218 M1284.5 980 V973" stroke="#808080"/><path d="M1299.5 211 V218 M1299.5 980 V973" stroke="#808080"/><path d="M1314.5 211 V218 M1314.5 980 V973" stroke="#808080"/><path d="M1329.5 211 V218 M1329.5 980 V973" stroke="#808080"/><path d="M1344.5 211 V226 M1344.5 980 V965" stroke="#808080"/><path d="M1359.5 211 V218 M1359.5 980 V973" stroke="#808080"/><path d="M1374.5 211 V218 M1374.5 980 V973" stroke="#808080"/><path d="M1389.5 211 V218 M1389.5 980 V973" stroke="#808080"/><path d="M1404.5 211 V218 M1404.5 980 V973" stroke="#808080"/><path d="M1420.5 211 V241 M1420.5 980 V950" stroke="#808080"/><path d="M1435.5 211 V218 M1435.5 980 V973" stroke="#808080"/><path d="M1450.5 211 V218 M1450.5 980 V973" stroke="#808080"/><path d="M1465.5 211 V218 M1465.5 980 V973" stroke="#808080"/><path d="M1480.5 211 V218 M1480.5 980 V973" stroke="#808080"/><path d="M1495.5 211 V226 M1495.5 980 V965" stroke="#808080"/><path d="M1510.5 211 V218 M1510.5 980 V973" stroke="#808080"/><path d="M1525.5 211 V218 M1525.5 980 V973" stroke="#808080"/><path d="M1540.5 211 V218 M1540.5 980 V973" stroke="#808080"/><path d="M1555.5 211 V218 M1555.5 980 V973" stroke="#808080"/><path d="M62 217.5 H65 M1571 217.5 H1568" stroke="#808080"/><path d="M62 225.5 H65 M1571 225.5 H1568" stroke="#808080"/><path d="M62 233.5 H65 M1571 233.5 H1568" stroke="#808080"/><path d="M62 240.5 H65 M1571 240.5 H1568" stroke="#808080"/><path d="M62 248.5 H69 M1571 248.5 H1564" stroke="#808080"/><path d="M62 256.5 H65 M1571 256.5 H1568" stroke="#808080"/><path d="M62 263.5 H65 M1571 263.5 H1568" stroke="#808080"/><path d="M62 271.5 H65 M1571 271.5 H1568" stroke="#808080"/><path d="M62 279.5 H65 M1571 279.5 H1568" stroke="#808080"/><path d="M62 287.5 H77 M1571 287.5 H1556" stroke="#808080"/><path d="M62 294.5 H65 M1571 294.5 H1568" stroke="#808080"/><path d="M62 302.5 H65 M1571 302.5 H1568" stroke="#808080"/><path d="M62 310.5 H65 M1571 310.5 H1568" stroke="#808080"/><path d="M62 317.5 H65 M1571 317.5 H1568" stroke="#808080"/><path d="M62 325.5 H69 M1571 325.5 H1564" stroke="#808080"/><path d="M62 333.5 H65 M1571 333.5 H1568" stroke="#808080"/><path d="M62 340.5 H65 M1571 340.5 H1568" stroke="#808080"/><path d="M62 348.5 H65 M1571 348.5 H1568" stroke="#808080"/><path d="M62 356.5 H65 M1571 356.5 H1568" stroke="#808080"/><path d="M62 364.5 H77 M1571 364.5 H1556" stroke="#808080"/><path d="M62 371.5 H65 M1571 371.5 H1568" stroke="#808080"/><path d="M62 379.5 H65 M1571 379.5 H1568" stroke="#808080"/><path d="M62 387.5 H65 M1571 387.5 H1568" stroke="#808080"/><path d="M62 394.5 H65 M1571 394.5 H1568" stroke="#808080"/><path d="M62 402.5 H69 M1571 402.5 H1564" stroke="#808080"/><path d="M62 410.5 H65 M1571 410.5 H1568" stroke="#808080"/><path d="M62 417.5 H65 M1571 417.5 H1568" stroke="#808080"/><path d="M62 425.5 H65 M1571 425.5 H1568" stroke="#808080"/><path d="M62 433.5 H65 M1571 433.5 H1568" stroke="#808080"/><path d="M62 441.5 H77 M1571 441.5 H1556" stroke="#808080"/><path d="M62 448.5 H65 M1571 448.5 H1568" stroke="#808080"/><path d="M62 456.5 H65 M1571 456.5 H1568" stroke="#808080"/><path d="M62 464.5 H65 M1571 464.5 H1568" stroke="#808080"/><path d="M62 471.5 H65 M1571 471.5 H1568" stroke="#808080"/><path d="M62 479.5 H69 M1571 479.5 H1564" stroke="#808080"/><path d="M62 487.5 H65 M1571 487.5 H1568" stroke="#808080"/><path d="M62 494.5 H65 M1571 494.5 H1568" stroke="#808080"/><path d="M62 502.5 H65 M1571 502.5 H1568" stroke="#808080"/><path d="M62 510.5 H65 M1571 510.5 H1568" stroke="#808080"/><path d="M62 518.5 H77 M1571 518.5 H1556" stroke="#808080"/><path d="M62 525.5 H65 M1571 525.5 H1568" stroke="#808080"/><path d="M62 533.5 H65 M1571 533.5 H1568" stroke="#808080"/><path d="M62 541.5 H65 M1571 541.5 H1568" stroke="#808080"/><path d="M62 548.5 H65 M1571 548.5 H1568" stroke="#808080"/><path d="M62 556.5 H69 M1571 556.5 H1564" stroke="#808080"/><path d="M62 564.5 H65 M1571 564.5 H1568" stroke="#808080"/><path d="M62 571.5 H65 M1571 571.5 H1568" stroke="#808080"/><path d="M62 579.5 H65 M1571 579.5 H1568" stroke="#808080"/><path d="M62 587.5 H65 M1571 587.5 H1568" stroke="#808080"/><path d="M62 595.5 H77 M1571 595.5 H1556" stroke="#808080"/><path d="M62 602.5 H65 M1571 602.5 H1568" stroke="#808080"/><path d="M62 610.5 H65 M1571 610.5 H1568" stroke="#808080"/><path d="M62 618.5 H65 M1571 618.5 H1568" stroke="#808080"/><path d="M62 625.5 H65 M1571 625.5 H1568" stroke="#808080"/><path d="M62 633.5 H69 M1571 633.5 H1564" stroke="#808080"/><path d="M62 641.5 H65 M1571 641.5 H1568" stroke="#808080"/><path d="M62 648.5 H65 M1571 648.5 H1568" stroke="#808080"/><path d="M62 656.5 H65 M1571 656.5 H1568" stroke="#808080"/><path d="M62 664.5 H65 M1571 664.5 H1568" stroke="#808080"/><path d="M62 672.5 H77 M1571 672.5 H1556" stroke="#808080"/><path d="M62 679.5 H65 M1571 679.5 H1568" stroke="#808080"/><path d="M62 687.5 H65 M1571 687.5 H1568" stroke="#808080"/><path d="M62 695.5 H65 M1571 695.5 H1568" stroke="#808080"/><path d="M62 702.5 H65 M1571 702.5 H1568" stroke="#808080"/><path d="M62 710.5 H69 M1571 710.5 H1564" stroke="#808080"/><path d="M62 718.5 H65 M1571 718.5 H1568" stroke="#808080"/><path d="M62 725.5 H65 M1571 725.5 H1568" stroke="#808080"/><path d="M62 733.5 H65 M1571 733.5 H1568" stroke="#808080"/><path d="M62 741.5 H65 M1571 741.5 H1568" stroke="#808080"/><path d="M62 749.5 H77 M1571 749.5 H1556" stroke="#808080"/><path d="M62 756.5 H65 M1571 756.5 H1568" stroke="#808080"/><path d="M62 764.5 H65 M1571 764.5 H1568" stroke="#808080"/><path d="M62 772.5 H65 M1571 772.5 H1568" stroke="#808080"/><path d="M62 779.5 H65 M1571 779.5 H1568" stroke="#808080"/><path d="M62 787.5 H69 M1571 787.5 H1564" stroke="#808080"/><path d="M62 795.5 H65 M1571 795.5 H1568" stroke="#808080"/><path d="M62 802.5 H65 M1571 802.5 H1568" stroke="#808080"/><path d="M62 810.5 H65 M1571 810.5 H1568" stroke="#808080"/><path d="M62 818.5 H65 M1571 818.5 H1568" stroke="#808080"/><path d="M62 826.5 H77 M1571 826.5 H1556" stroke="#808080"/><path d="M62 833.5 H65 M1571 833.5 H1568" stroke="#808080"/><path d="M62 841.5 H65 M1571 841.5 H1568" stroke="#808080"/><path d="M62 849.5 H65 M1571 849.5 H1568" stroke="#808080"/><path d="M62 856.5 H65 M1571 856.5 H1568" stroke="#808080"/><path d="M62 864.5 H69 M1571 864.5 H1564" stroke="#808080"/><path d="M62 872.5 H65 M1571 872.5 H1568" stroke="#808080"/><path d="M62 879.5 H65 M1571 879.5 H1568" stroke="#808080"/><path d="M62 887.5 H65 M1571 887.5 H1568" stroke="#808080"/><path d="M62 895.5 H65 M1571 895.5 H1568" stroke="#808080"/><path d="M62 903.5 H77 M1571 903.5 H1556" stroke="#808080"/><path d="M62 910.5 H65 M1571 910.5 H1568" stroke="#808080"/><path d="M62 918.5 H65 M1571 918.5 H1568" stroke="#808080"/><path d="M62 926.5 H65 M1571 926.5 H1568" stroke="#808080"/><path d="M62 933.5 H65 M1571 933.5 H1568" stroke="#808080"/><path d="M62 941.5 H69 M1571 941.5 H1564" stroke="#808080"/><path d="M62 949.5 H65 M1571 949.5 H1568" stroke="#808080"/><path d="M62 956.5 H65 M1571 956.5 H1568" stroke="#808080"/><path d="M62 964.5 H65 M1571 964.5 H1568" stroke="#808080"/><path d="M62 972.5 H65 M1571 972.5 H1568" stroke="#808080"/><path d="M212.5 243 V949" stroke="#808080" stroke-dasharray="1 2"/><path d="M363.5 243 V949" stroke="#808080" stroke-dasharray="1 2"/><path d="M514.5 243 V949" stroke="#808080" stroke-dasharray="1 2"/><path d="M665.5 243 V949" stroke="#808080" stroke-dasharray="1 2"/><path d="M816.5 244 V947" stroke="#808080" stroke-dasharray="4 2"/><path d="M967.5 243 V949" stroke="#808080" stroke-dasharray="1 2"/><path d="M1118.5 243 V949" stroke="#808080" stroke-dasharray="1 2"/><path d="M1269.5 243 V949" stroke="#808080" stroke-dasharray="1 2"/><path d="M1420.5 243 V949" stroke="#808080" stroke-dasharray="1 2"/><path d="M78 287.5 H1555" stroke="#808080" stroke-dasharray="1 2"/><path d="M78 364.5 H1555" stroke="#808080" stroke-dasharray="1 2"/><path d="M78 441.5 H1555" stroke="#808080" stroke-dasharray="1 2"/><path d="M78 518.5 H1555" stroke="#808080" stroke-dasharray="1 2"/><path d="M78 595.5 H1555" stroke="#808080" stroke-dasharray="4 2"/><path d="M78 672.5 H1555" stroke="#808080" stroke-dasharray="1 2"/><path d="M78 749.5 H1555" stroke="#808080" stroke-dasharray="1 2"/><path d="M78 826.5 H1555" stroke="#808080" stroke-dasharray="1 2"/><path d="M78 903.5 H1555" stroke="#808080" stroke-dasharray="1 2"/><rect x="61.5" y="210.5" width="1510" height="770" fill="none" stroke="#808080"/></svg>
<svg class="r" style="left:0px;top:0px;" width="1854" height="1048" viewBox="0 0 1854 1048"><path d="M203.5 210.5 L220.5 210.5 L212 225 Z" fill="#000"/><path d="M62 587.5 L77 595 L62 603 Z" fill="#0000ff"/><path d="M1571 463.5 L1556 471.5 L1571 479.5 Z" fill="#0000ff"/></svg>
<div class="r" style="left:1601px;top:181px;width:1px;height:828px;background:#c9c9c9"></div>
<div class="r" style="left:1602px;top:181px;width:248px;height:828px;background:#efefef"></div>
<div class="r" style="left:1831px;top:210px;width:19px;height:796px;border-left:1px solid #c8c8c8;background:linear-gradient(90deg,#f4f4f4,#fdfdfd,#efefef)"></div>
<div class="r" style="left:1832px;top:222px;width:14px;height:1px;background:#c8c8c8"></div>
<div class="r" style="left:1832px;top:991px;width:14px;height:1px;background:#c8c8c8"></div>
<svg class="r" style="left:1834px;top:212px;" width="10" height="6" viewBox="0 0 10 6"><path d="M0.5 5.5 L9.5 5.5 L5 0.5 Z" fill="#555"/></svg>
<svg class="r" style="left:1834px;top:995px;" width="10" height="6" viewBox="0 0 10 6"><path d="M0.5 0.5 L9.5 0.5 L5 5.5 Z" fill="#555"/></svg>
<div class="r" style="left:1602px;top:1005px;width:229px;height:4px;background:#efefef"></div>
<svg class="r" style="left:1604px;top:190px;" width="22" height="12" viewBox="0 0 22 12"><defs><linearGradient id="ga2" x1="0" y1="0" x2="0" y2="1"><stop offset="0" stop-color="#9ed68a"/><stop offset="1" stop-color="#4e9e3e"/></linearGradient></defs><path d="M1 3.5 H12.5 V0.8 L20.5 6 L12.5 11.2 V8.5 H1 Z" fill="url(#ga2)"/></svg>
<div class="r" style="left:1605px;top:210px;width:224px;height:116px;border:4px solid #000;background:#efefef"></div>
<div class="r" style="left:1610px;top:220px;width:13px;height:13px;background:#fff;border:1px solid #bdbdbd"></div>
<svg class="r" style="left:1611px;top:221px;" width="12" height="12" viewBox="0 0 12 12"><path d="M2 6 L4.8 10 L10 1.5" fill="none" stroke="#000" stroke-width="1.8"/></svg>
<div class="t" style="left:1628.7px;top:218.70px;font-size:15px;line-height:15px;color:#1e1e1e;font-weight:normal;">Time</div>
<div class="r" style="left:1796px;top:214px;width:29px;height:24px;background:linear-gradient(#fbfbfb,#e6e6e6);border:1px solid #c2c2c2;border-radius:3px"></div>
<svg class="r" style="left:1798px;top:215px;" width="24" height="22" viewBox="0 0 24 22"><g transform="translate(11,11.5) scale(0.78)"><g transform="rotate(-45) scale(0.8,1) rotate(45)"><path d="M9.90,0.00 L9.72,1.89 L12.26,2.92 L11.27,5.64 L8.66,4.80 L7.58,6.36 L6.23,7.69 L7.51,10.12 L5.00,11.56 L3.55,9.24 L1.72,9.75 L-0.17,9.90 L-0.75,12.58 L-3.60,12.07 L-3.22,9.36 L-4.95,8.57 L-6.49,7.47 L-8.66,9.15 L-10.52,6.94 L-8.49,5.10 L-9.30,3.39 L-9.78,1.55 L-12.52,1.45 L-12.52,-1.45 L-9.78,-1.55 L-9.30,-3.39 L-8.49,-5.10 L-10.52,-6.94 L-8.66,-9.15 L-6.49,-7.47 L-4.95,-8.57 L-3.22,-9.36 L-3.60,-12.07 L-0.75,-12.58 L-0.17,-9.90 L1.72,-9.75 L3.55,-9.24 L5.00,-11.56 L7.51,-10.12 L6.23,-7.69 L7.58,-6.36 L8.66,-4.80 L11.27,-5.64 L12.26,-2.92 L9.72,-1.89 Z" transform="translate(1.2,1.2)" fill="#4e5a62" opacity="0.85"/><path d="M9.90,0.00 L9.72,1.89 L12.26,2.92 L11.27,5.64 L8.66,4.80 L7.58,6.36 L6.23,7.69 L7.51,10.12 L5.00,11.56 L3.55,9.24 L1.72,9.75 L-0.17,9.90 L-0.75,12.58 L-3.60,12.07 L-3.22,9.36 L-4.95,8.57 L-6.49,7.47 L-8.66,9.15 L-10.52,6.94 L-8.49,5.10 L-9.30,3.39 L-9.78,1.55 L-12.52,1.45 L-12.52,-1.45 L-9.78,-1.55 L-9.30,-3.39 L-8.49,-5.10 L-10.52,-6.94 L-8.66,-9.15 L-6.49,-7.47 L-4.95,-8.57 L-3.22,-9.36 L-3.60,-12.07 L-0.75,-12.58 L-0.17,-9.90 L1.72,-9.75 L3.55,-9.24 L5.00,-11.56 L7.51,-10.12 L6.23,-7.69 L7.58,-6.36 L8.66,-4.80 L11.27,-5.64 L12.26,-2.92 L9.72,-1.89 Z" fill="url(#gg)" stroke="#8e979e" stroke-width="0.7"/><circle r="7" fill="none" stroke="#b9c1c7" stroke-width="1.2"/><circle r="5" fill="#34434d"/><circle cx="1.6" cy="-0.6" r="2.9" fill="#f6f8f9"/></g></g><path d="M18 19 L22 19 L20 21.5 Z" fill="#555"/></svg>
<div class="t" style="left:1613.0px;top:245.90px;font-size:15px;line-height:15px;color:#1e1e1e;font-weight:normal;">Position:</div>
<div class="r" style="left:1694px;top:240px;width:130px;height:27px;background:#fff;border:1px solid #b5b5b5;border-radius:3px"></div>
<div class="r" style="left:1803px;top:241px;width:20px;height:25px;background:linear-gradient(#fafafa,#e6e6e6);border-left:1px solid #c8c8c8;border-radius:0 3px 3px 0"></div>
<svg class="r" style="left:1808px;top:251px;" width="10" height="6" viewBox="0 0 10 6"><path d="M0.5 0.5 L9.5 0.5 L5 5.5 Z" fill="#555"/></svg>
<div class="t" style="left:1698.0px;top:246.70px;font-size:15px;line-height:15px;color:#1e1e1e;font-weight:normal;">80 ms</div>
<div class="t" style="left:1613.0px;top:274.40px;font-size:15px;line-height:15px;color:#1e1e1e;font-weight:normal;">Base:</div>
<div class="r" style="left:1694px;top:268px;width:130px;height:27px;background:#fff;border:1px solid #b5b5b5;border-radius:3px"></div>
<div class="r" style="left:1803px;top:269px;width:20px;height:25px;background:linear-gradient(#fafafa,#e6e6e6);border-left:1px solid #c8c8c8;border-radius:0 3px 3px 0"></div>
<svg class="r" style="left:1808px;top:279px;" width="10" height="6" viewBox="0 0 10 6"><path d="M0.5 0.5 L9.5 0.5 L5 5.5 Z" fill="#555"/></svg>
<div class="t" style="left:1698.0px;top:274.70px;font-size:15px;line-height:15px;color:#1e1e1e;font-weight:normal;">20 ms/div</div>
<div class="r" style="left:1610px;top:296px;width:214px;height:25px;background:linear-gradient(#dedede,#d2d2d2);border:1px solid #bdbdbd;border-radius:3px"></div>
<svg width="0" height="0" style="position:absolute"><defs><linearGradient id="gd" x1="0" y1="0" x2="1" y2="0"><stop offset="0" stop-color="#4fa845"/><stop offset="0.45" stop-color="#a6dc92"/><stop offset="1" stop-color="#3c9232"/></linearGradient></defs></svg>
<svg class="r" style="left:1617px;top:300px;" width="10" height="16" viewBox="0 0 10 16"><path d="M3 0.5 H7.5 V9.5 H10.5 L5.25 16 L0 9.5 H3 Z" fill="url(#gd)" stroke="#3f8f35" stroke-width="0.5"/></svg>
<div class="t" style="left:1634.0px;top:300.80px;font-size:15px;line-height:15px;color:#1e1e1e;font-weight:normal;">Rate, Samples...</div>
<svg class="r" style="left:1607px;top:331px;" width="22" height="22" viewBox="0 0 22 22"><g transform="translate(10,11) scale(0.8)"><g transform="rotate(-45) scale(0.8,1) rotate(45)"><path d="M9.90,0.00 L9.72,1.89 L12.26,2.92 L11.27,5.64 L8.66,4.80 L7.58,6.36 L6.23,7.69 L7.51,10.12 L5.00,11.56 L3.55,9.24 L1.72,9.75 L-0.17,9.90 L-0.75,12.58 L-3.60,12.07 L-3.22,9.36 L-4.95,8.57 L-6.49,7.47 L-8.66,9.15 L-10.52,6.94 L-8.49,5.10 L-9.30,3.39 L-9.78,1.55 L-12.52,1.45 L-12.52,-1.45 L-9.78,-1.55 L-9.30,-3.39 L-8.49,-5.10 L-10.52,-6.94 L-8.66,-9.15 L-6.49,-7.47 L-4.95,-8.57 L-3.22,-9.36 L-3.60,-12.07 L-0.75,-12.58 L-0.17,-9.90 L1.72,-9.75 L3.55,-9.24 L5.00,-11.56 L7.51,-10.12 L6.23,-7.69 L7.58,-6.36 L8.66,-4.80 L11.27,-5.64 L12.26,-2.92 L9.72,-1.89 Z" transform="translate(1.2,1.2)" fill="#4e5a62" opacity="0.85"/><path d="M9.90,0.00 L9.72,1.89 L12.26,2.92 L11.27,5.64 L8.66,4.80 L7.58,6.36 L6.23,7.69 L7.51,10.12 L5.00,11.56 L3.55,9.24 L1.72,9.75 L-0.17,9.90 L-0.75,12.58 L-3.60,12.07 L-3.22,9.36 L-4.95,8.57 L-6.49,7.47 L-8.66,9.15 L-10.52,6.94 L-8.49,5.10 L-9.30,3.39 L-9.78,1.55 L-12.52,1.45 L-12.52,-1.45 L-9.78,-1.55 L-9.30,-3.39 L-8.49,-5.10 L-10.52,-6.94 L-8.66,-9.15 L-6.49,-7.47 L-4.95,-8.57 L-3.22,-9.36 L-3.60,-12.07 L-0.75,-12.58 L-0.17,-9.90 L1.72,-9.75 L3.55,-9.24 L5.00,-11.56 L7.51,-10.12 L6.23,-7.69 L7.58,-6.36 L8.66,-4.80 L11.27,-5.64 L12.26,-2.92 L9.72,-1.89 Z" fill="url(#gg)" stroke="#8e979e" stroke-width="0.7"/><circle r="7" fill="none" stroke="#b9c1c7" stroke-width="1.2"/><circle r="5" fill="#34434d"/><circle cx="1.6" cy="-0.6" r="2.9" fill="#f6f8f9"/></g></g></svg>
<div class="t" style="left:1632.5px;top:333.90px;font-size:15px;line-height:15px;color:#1e1e1e;font-weight:normal;">Options</div>
<svg class="r" style="left:1816px;top:339px;" width="9" height="5" viewBox="0 0 9 5"><path d="M0.5 0.5 L8.5 0.5 L4.5 4.5 Z" fill="#555"/></svg>
<div class="r" style="left:1605px;top:357px;width:224px;height:26px;background:linear-gradient(#fafafa,#e9e9e9);border:1px solid #c2c2c2;border-radius:3px"></div>
<svg class="r" style="left:1607px;top:361px;" width="15" height="15" viewBox="0 0 15 15"><path d="M5.5 0.5 H9.5 V5.5 H14.5 V9.5 H9.5 V14.5 H5.5 V9.5 H0.5 V5.5 H5.5 Z" fill="url(#gp)"/></svg>
<div class="t" style="left:1626.3px;top:361.70px;font-size:15px;line-height:15px;color:#1e1e1e;font-weight:normal;">Add Channel</div>
<svg class="r" style="left:1816px;top:367px;" width="9" height="5" viewBox="0 0 9 5"><path d="M0.5 0.5 L8.5 0.5 L4.5 4.5 Z" fill="#555"/></svg>
<div class="r" style="left:1605px;top:384px;width:224px;height:33px;border:4px solid #ff8000;background:#efefef"></div>
<div class="r" style="left:1610px;top:393px;width:13px;height:13px;background:#fff;border:1px solid #bdbdbd"></div>
<div class="t" style="left:1628.3px;top:393.00px;font-size:15px;line-height:15px;color:#1e1e1e;font-weight:normal;">Channel 1 (1&#177;)</div>
<div class="r" style="left:1796px;top:388px;width:29px;height:25px;background:linear-gradient(#fbfbfb,#e6e6e6);border:1px solid #c2c2c2;border-radius:3px"></div>
<svg class="r" style="left:1798px;top:389px;" width="24" height="22" viewBox="0 0 24 22"><g transform="translate(11,11.5) scale(0.78)"><g transform="rotate(-45) scale(0.8,1) rotate(45)"><path d="M9.90,0.00 L9.72,1.89 L12.26,2.92 L11.27,5.64 L8.66,4.80 L7.58,6.36 L6.23,7.69 L7.51,10.12 L5.00,11.56 L3.55,9.24 L1.72,9.75 L-0.17,9.90 L-0.75,12.58 L-3.60,12.07 L-3.22,9.36 L-4.95,8.57 L-6.49,7.47 L-8.66,9.15 L-10.52,6.94 L-8.49,5.10 L-9.30,3.39 L-9.78,1.55 L-12.52,1.45 L-12.52,-1.45 L-9.78,-1.55 L-9.30,-3.39 L-8.49,-5.10 L-10.52,-6.94 L-8.66,-9.15 L-6.49,-7.47 L-4.95,-8.57 L-3.22,-9.36 L-3.60,-12.07 L-0.75,-12.58 L-0.17,-9.90 L1.72,-9.75 L3.55,-9.24 L5.00,-11.56 L7.51,-10.12 L6.23,-7.69 L7.58,-6.36 L8.66,-4.80 L11.27,-5.64 L12.26,-2.92 L9.72,-1.89 Z" transform="translate(1.2,1.2)" fill="#4e5a62" opacity="0.85"/><path d="M9.90,0.00 L9.72,1.89 L12.26,2.92 L11.27,5.64 L8.66,4.80 L7.58,6.36 L6.23,7.69 L7.51,10.12 L5.00,11.56 L3.55,9.24 L1.72,9.75 L-0.17,9.90 L-0.75,12.58 L-3.60,12.07 L-3.22,9.36 L-4.95,8.57 L-6.49,7.47 L-8.66,9.15 L-10.52,6.94 L-8.49,5.10 L-9.30,3.39 L-9.78,1.55 L-12.52,1.45 L-12.52,-1.45 L-9.78,-1.55 L-9.30,-3.39 L-8.49,-5.10 L-10.52,-6.94 L-8.66,-9.15 L-6.49,-7.47 L-4.95,-8.57 L-3.22,-9.36 L-3.60,-12.07 L-0.75,-12.58 L-0.17,-9.90 L1.72,-9.75 L3.55,-9.24 L5.00,-11.56 L7.51,-10.12 L6.23,-7.69 L7.58,-6.36 L8.66,-4.80 L11.27,-5.64 L12.26,-2.92 L9.72,-1.89 Z" fill="url(#gg)" stroke="#8e979e" stroke-width="0.7"/><circle r="7" fill="none" stroke="#b9c1c7" stroke-width="1.2"/><circle r="5" fill="#34434d"/><circle cx="1.6" cy="-0.6" r="2.9" fill="#f6f8f9"/></g></g><path d="M18 19 L22 19 L20 21.5 Z" fill="#555"/></svg>
<div class="r" style="left:1605px;top:418px;width:224px;height:90px;border:4px solid #0000ff;background:#efefef"></div>
<div class="r" style="left:1610px;top:427px;width:13px;height:13px;background:#fff;border:1px solid #bdbdbd"></div>
<svg class="r" style="left:1611px;top:428px;" width="12" height="12" viewBox="0 0 12 12"><path d="M2 6 L4.8 10 L10 1.5" fill="none" stroke="#000" stroke-width="1.8"/></svg>
<div class="t" style="left:1628.3px;top:426.30px;font-size:15px;line-height:15px;color:#1e1e1e;font-weight:normal;">Channel 2 (2&#177;)</div>
<div class="r" style="left:1796px;top:422px;width:29px;height:24px;background:linear-gradient(#fbfbfb,#e6e6e6);border:1px solid #c2c2c2;border-radius:3px"></div>
<svg class="r" style="left:1798px;top:423px;" width="24" height="22" viewBox="0 0 24 22"><g transform="translate(11,11.5) scale(0.78)"><g transform="rotate(-45) scale(0.8,1) rotate(45)"><path d="M9.90,0.00 L9.72,1.89 L12.26,2.92 L11.27,5.64 L8.66,4.80 L7.58,6.36 L6.23,7.69 L7.51,10.12 L5.00,11.56 L3.55,9.24 L1.72,9.75 L-0.17,9.90 L-0.75,12.58 L-3.60,12.07 L-3.22,9.36 L-4.95,8.57 L-6.49,7.47 L-8.66,9.15 L-10.52,6.94 L-8.49,5.10 L-9.30,3.39 L-9.78,1.55 L-12.52,1.45 L-12.52,-1.45 L-9.78,-1.55 L-9.30,-3.39 L-8.49,-5.10 L-10.52,-6.94 L-8.66,-9.15 L-6.49,-7.47 L-4.95,-8.57 L-3.22,-9.36 L-3.60,-12.07 L-0.75,-12.58 L-0.17,-9.90 L1.72,-9.75 L3.55,-9.24 L5.00,-11.56 L7.51,-10.12 L6.23,-7.69 L7.58,-6.36 L8.66,-4.80 L11.27,-5.64 L12.26,-2.92 L9.72,-1.89 Z" transform="translate(1.2,1.2)" fill="#4e5a62" opacity="0.85"/><path d="M9.90,0.00 L9.72,1.89 L12.26,2.92 L11.27,5.64 L8.66,4.80 L7.58,6.36 L6.23,7.69 L7.51,10.12 L5.00,11.56 L3.55,9.24 L1.72,9.75 L-0.17,9.90 L-0.75,12.58 L-3.60,12.07 L-3.22,9.36 L-4.95,8.57 L-6.49,7.47 L-8.66,9.15 L-10.52,6.94 L-8.49,5.10 L-9.30,3.39 L-9.78,1.55 L-12.52,1.45 L-12.52,-1.45 L-9.78,-1.55 L-9.30,-3.39 L-8.49,-5.10 L-10.52,-6.94 L-8.66,-9.15 L-6.49,-7.47 L-4.95,-8.57 L-3.22,-9.36 L-3.60,-12.07 L-0.75,-12.58 L-0.17,-9.90 L1.72,-9.75 L3.55,-9.24 L5.00,-11.56 L7.51,-10.12 L6.23,-7.69 L7.58,-6.36 L8.66,-4.80 L11.27,-5.64 L12.26,-2.92 L9.72,-1.89 Z" fill="url(#gg)" stroke="#8e979e" stroke-width="0.7"/><circle r="7" fill="none" stroke="#b9c1c7" stroke-width="1.2"/><circle r="5" fill="#34434d"/><circle cx="1.6" cy="-0.6" r="2.9" fill="#f6f8f9"/></g></g><path d="M18 19 L22 19 L20 21.5 Z" fill="#555"/></svg>
<div class="t" style="left:1613.0px;top:453.70px;font-size:15px;line-height:15px;color:#1e1e1e;font-weight:normal;">Offset:</div>
<div class="r" style="left:1694px;top:449px;width:130px;height:25px;background:#fff;border:1px solid #b5b5b5;border-radius:3px"></div>
<div class="r" style="left:1803px;top:450px;width:20px;height:23px;background:linear-gradient(#fafafa,#e6e6e6);border-left:1px solid #c8c8c8;border-radius:0 3px 3px 0"></div>
<svg class="r" style="left:1808px;top:459px;" width="10" height="6" viewBox="0 0 10 6"><path d="M0.5 0.5 L9.5 0.5 L5 5.5 Z" fill="#555"/></svg>
<div class="t" style="left:1698.0px;top:453.70px;font-size:15px;line-height:15px;color:#1e1e1e;font-weight:normal;">0 V</div>
<div class="t" style="left:1613.0px;top:481.80px;font-size:15px;line-height:15px;color:#1e1e1e;font-weight:normal;">Range:</div>
<div class="r" style="left:1694px;top:477px;width:130px;height:25px;background:#fff;border:1px solid #b5b5b5;border-radius:3px"></div>
<div class="r" style="left:1803px;top:478px;width:20px;height:23px;background:linear-gradient(#fafafa,#e6e6e6);border-left:1px solid #c8c8c8;border-radius:0 3px 3px 0"></div>
<svg class="r" style="left:1808px;top:487px;" width="10" height="6" viewBox="0 0 10 6"><path d="M0.5 0.5 L9.5 0.5 L5 5.5 Z" fill="#555"/></svg>
<div class="t" style="left:1698.0px;top:481.70px;font-size:15px;line-height:15px;color:#1e1e1e;font-weight:normal;">1 V/div</div>
<div class="r" style="left:1609px;top:510px;width:86px;height:27px;background:linear-gradient(#dedede,#d2d2d2);border:1px solid #bdbdbd;border-radius:3px"></div>
<svg class="r" style="left:1617px;top:514px;" width="10" height="16" viewBox="0 0 10 16"><path d="M3 0.5 H7.5 V9.5 H10.5 L5.25 16 L0 9.5 H3 Z" fill="url(#gd)" stroke="#3f8f35" stroke-width="0.5"/></svg>
<div class="t" style="left:1636.0px;top:515.70px;font-size:15px;line-height:15px;color:#1e1e1e;font-weight:normal;">Filters</div>
<div class="r" style="left:1699px;top:510px;width:131px;height:27px;background:linear-gradient(#dedede,#d2d2d2);border:1px solid #bdbdbd;border-radius:3px"></div>
<svg class="r" style="left:1707px;top:514px;" width="10" height="16" viewBox="0 0 10 16"><path d="M3 0.5 H7.5 V9.5 H10.5 L5.25 16 L0 9.5 H3 Z" fill="url(#gd)" stroke="#3f8f35" stroke-width="0.5"/></svg>
<div class="t" style="left:1726.0px;top:515.70px;font-size:15px;line-height:15px;color:#1e1e1e;font-weight:normal;">Wavegens</div>
<div class="r" style="left:1128px;top:1014px;width:141px;height:29px;background:linear-gradient(#fbfbfb,#e9e9e9);border:1px solid #bdbdbd;border-radius:3px"></div>
<svg class="r" style="left:1133px;top:1017px;" width="20" height="22" viewBox="0 0 20 22"><path d="M7 20 Q3 15 3 11 L5 10 L7 13 L7 4 Q8 2.5 9 4 L9 9 L11 9 L13 9.5 L15 10 L16 11 L16 17 L14 20 Z" fill="#d8d8d8" stroke="#444" stroke-width="1"/><path d="M4 1 L6 3 M12 1 L10 3 M8 0 V2" stroke="#555" stroke-width="0.8"/></svg>
<div class="t" style="left:1154.0px;top:1021.00px;font-size:15px;line-height:15px;color:#1e1e1e;font-weight:normal;">Manual Trigger</div>
<div class="r" style="left:1276px;top:1014px;width:255px;height:29px;background:linear-gradient(#fbfbfb,#e9e9e9);border:1px solid #bdbdbd;border-radius:3px"></div>
<svg class="r" style="left:1279px;top:1018px;" width="24" height="16" viewBox="0 0 24 16"><path d="M5 2 H22 L19 8 H2 Z" fill="#d9d9d9" stroke="#7a7a7a" stroke-width="0.8"/><path d="M2 8 H19 V13 H2 Z" fill="#b9b9b9" stroke="#7a7a7a" stroke-width="0.8"/><path d="M19 8 L22 2 V7.5 L19 13 Z" fill="#9c9c9c" stroke="#7a7a7a" stroke-width="0.6"/><rect x="4" y="10" width="2" height="1.2" fill="#4caf50"/><rect x="7.5" y="10" width="2" height="1.2" fill="#e04040"/><rect x="11" y="10" width="2" height="1.2" fill="#e04040"/></svg>
<div class="t" style="left:1302.0px;top:1021.43px;font-size:14.5px;line-height:14.5px;color:#1e1e1e;font-weight:normal;">Discovery3 C SN:210415B99C58</div>
<div class="r" style="left:1537px;top:1014px;width:100px;height:29px;background:linear-gradient(#fbfbfb,#e9e9e9);border:1px solid #bdbdbd;border-radius:3px"></div>
<svg class="r" style="left:1540px;top:1015px;" width="26" height="22" viewBox="0 0 26 22"><path d="M6 9 H23 L20 15 H3 Z" fill="#d9d9d9" stroke="#7a7a7a" stroke-width="0.8"/><path d="M3 15 H20 V19 H3 Z" fill="#b9b9b9" stroke="#7a7a7a" stroke-width="0.8"/><path d="M20 15 L23 9 V14 L20 19 Z" fill="#9c9c9c"/><g transform="translate(8,7) scale(0.5)"><g transform="rotate(-45) scale(0.8,1) rotate(45)"><path d="M9.90,0.00 L9.72,1.89 L12.26,2.92 L11.27,5.64 L8.66,4.80 L7.58,6.36 L6.23,7.69 L7.51,10.12 L5.00,11.56 L3.55,9.24 L1.72,9.75 L-0.17,9.90 L-0.75,12.58 L-3.60,12.07 L-3.22,9.36 L-4.95,8.57 L-6.49,7.47 L-8.66,9.15 L-10.52,6.94 L-8.49,5.10 L-9.30,3.39 L-9.78,1.55 L-12.52,1.45 L-12.52,-1.45 L-9.78,-1.55 L-9.30,-3.39 L-8.49,-5.10 L-10.52,-6.94 L-8.66,-9.15 L-6.49,-7.47 L-4.95,-8.57 L-3.22,-9.36 L-3.60,-12.07 L-0.75,-12.58 L-0.17,-9.90 L1.72,-9.75 L3.55,-9.24 L5.00,-11.56 L7.51,-10.12 L6.23,-7.69 L7.58,-6.36 L8.66,-4.80 L11.27,-5.64 L12.26,-2.92 L9.72,-1.89 Z" transform="translate(1.2,1.2)" fill="#4e5a62" opacity="0.85"/><path d="M9.90,0.00 L9.72,1.89 L12.26,2.92 L11.27,5.64 L8.66,4.80 L7.58,6.36 L6.23,7.69 L7.51,10.12 L5.00,11.56 L3.55,9.24 L1.72,9.75 L-0.17,9.90 L-0.75,12.58 L-3.60,12.07 L-3.22,9.36 L-4.95,8.57 L-6.49,7.47 L-8.66,9.15 L-10.52,6.94 L-8.49,5.10 L-9.30,3.39 L-9.78,1.55 L-12.52,1.45 L-12.52,-1.45 L-9.78,-1.55 L-9.30,-3.39 L-8.49,-5.10 L-10.52,-6.94 L-8.66,-9.15 L-6.49,-7.47 L-4.95,-8.57 L-3.22,-9.36 L-3.60,-12.07 L-0.75,-12.58 L-0.17,-9.90 L1.72,-9.75 L3.55,-9.24 L5.00,-11.56 L7.51,-10.12 L6.23,-7.69 L7.58,-6.36 L8.66,-4.80 L11.27,-5.64 L12.26,-2.92 L9.72,-1.89 Z" fill="url(#gg)" stroke="#8e979e" stroke-width="0.7"/><circle r="7" fill="none" stroke="#b9c1c7" stroke-width="1.2"/><circle r="5" fill="#34434d"/><circle cx="1.6" cy="-0.6" r="2.9" fill="#f6f8f9"/></g></g></svg>
<div class="t" style="left:1564.4px;top:1021.00px;font-size:15px;line-height:15px;color:#1e1e1e;font-weight:normal;">100 MHz</div>
<svg class="r" style="left:1627px;top:1036px;" width="7" height="4" viewBox="0 0 7 4"><path d="M0.5 0.5 L6.5 0.5 L3.5 3.5 Z" fill="#555"/></svg>
<div class="r" style="left:1644px;top:1014px;width:111px;height:29px;background:linear-gradient(#fbfbfb,#e9e9e9);border:1px solid #bdbdbd;border-radius:3px"></div>
<div class="t" style="left:1666.0px;top:1021.00px;font-size:15px;line-height:15px;color:#1e1e1e;font-weight:normal;">Status: LV</div>
<svg class="r" style="left:1745px;top:1036px;" width="7" height="4" viewBox="0 0 7 4"><path d="M0.5 0.5 L6.5 0.5 L3.5 3.5 Z" fill="#555"/></svg>
<div class="r" style="left:1762px;top:1014px;width:88px;height:29px;background:linear-gradient(#fbfbfb,#e9e9e9);border:1px solid #bdbdbd;border-radius:3px"></div>
<svg class="r" style="left:1765px;top:1019px;" width="22" height="18" viewBox="0 0 22 18"><path d="M1.5 2 L6.5 2 L11 12 L14.5 2 L20.5 2 L14 16.5 L11 16.5 L9 11.5 L7 16.5 L4 16.5 Z" fill="#1a9a45" stroke="#3a3a3a" stroke-width="1"/><path d="M12 7 L14.8 3 L19.5 3 L16.5 11 Z" fill="#8fd04a"/></svg>
<div class="t" style="left:1787.3px;top:1021.00px;font-size:15px;line-height:15px;color:#1e1e1e;font-weight:normal;">v3.24.2</div>
</body></html>
